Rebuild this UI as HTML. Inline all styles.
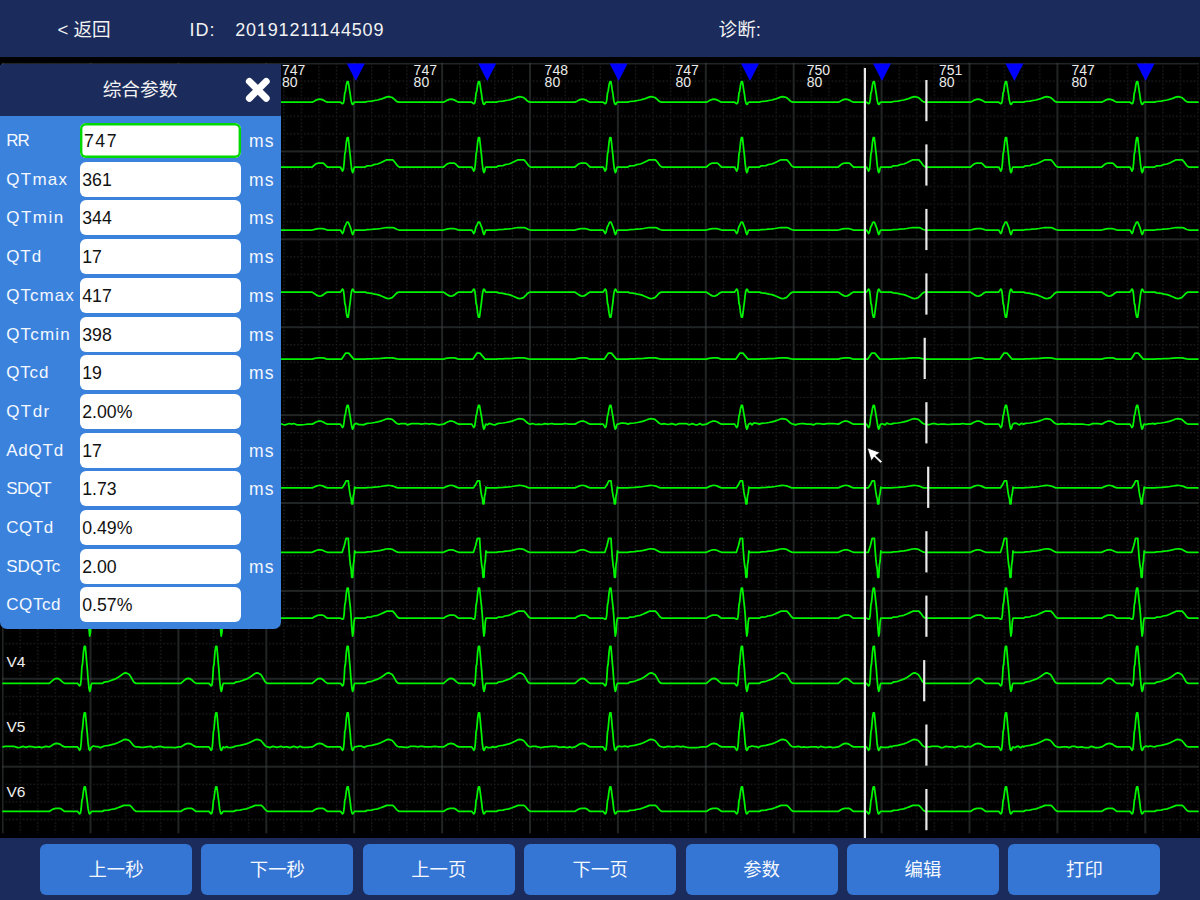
<!DOCTYPE html>
<html lang="zh"><head><meta charset="utf-8"><title>ECG</title>
<style>
html,body{margin:0;padding:0;background:#000;}
body{width:1200px;height:900px;position:relative;overflow:hidden;font-family:"Liberation Sans","Noto Sans CJK SC",sans-serif;color:#fff;}
#hdr{position:absolute;left:0;top:0;width:1200px;height:57px;background:#1a2b5c;}
#hdr span{position:absolute;top:0;line-height:60.6px;font-size:18px;color:#f2f2f2;white-space:nowrap;}
#hdr .cj{font-size:18.6px;}
#ecg{position:absolute;left:0;top:0;}
#panel{position:absolute;left:0;top:63.5px;width:280.8px;height:565.3px;background:#3b82dc;border-radius:4px 0 7px 7px;overflow:hidden;}
#ptitle{position:absolute;left:0;top:0;width:100%;height:52px;background:#1a2b5c;}
#ptitle span{position:absolute;left:0;width:280px;text-align:center;top:0;line-height:51.4px;font-size:18.7px;color:#f2f2f2;}
#close{position:absolute;left:243.7px;top:12.1px;}
.row{position:absolute;left:0;width:281px;height:35px;}
.row .lab{position:absolute;left:6.2px;top:0;line-height:36px;font-size:17px;color:#f4f8ff;white-space:nowrap;}
.row .inp{position:absolute;left:79.6px;top:0;width:161.6px;height:35px;box-sizing:border-box;background:#fff;border-radius:6px;color:#111;font-size:17.7px;line-height:36px;padding-left:2.7px;}
.row.first .inp{box-shadow:inset 0 0 0 2.4px #00d800;height:35.3px;padding-left:4.4px;letter-spacing:1.5px;}
.row .unit{position:absolute;left:249px;top:0;line-height:36px;font-size:17.5px;letter-spacing:1.2px;color:#f4f8ff;}
#bar{position:absolute;left:0;top:838.4px;width:1200px;height:61.6px;background:#1a2b5c;}
.btn{position:absolute;top:5.2px;width:152px;height:51.8px;background:#3575d3;border-radius:6px;text-align:center;line-height:52.6px;font-size:18.4px;color:#f4f8ff;}
</style></head>
<body>
<svg id="ecg" width="1200" height="900" viewBox="0 0 1200 900">
<defs>
<pattern id="g" x="2.60" y="63.50" width="87.900" height="87.900" patternUnits="userSpaceOnUse"><g fill="#2b2d2d"><rect x="16.98" y="-0.60" width="1.2" height="1.2"/><rect x="16.98" y="2.92" width="1.2" height="1.2"/><rect x="2.92" y="16.98" width="1.2" height="1.2"/><rect x="16.98" y="6.43" width="1.2" height="1.2"/><rect x="6.43" y="16.98" width="1.2" height="1.2"/><rect x="16.98" y="9.95" width="1.2" height="1.2"/><rect x="9.95" y="16.98" width="1.2" height="1.2"/><rect x="16.98" y="13.46" width="1.2" height="1.2"/><rect x="13.46" y="16.98" width="1.2" height="1.2"/><rect x="16.98" y="16.98" width="1.2" height="1.2"/><rect x="16.98" y="20.50" width="1.2" height="1.2"/><rect x="20.50" y="16.98" width="1.2" height="1.2"/><rect x="16.98" y="24.01" width="1.2" height="1.2"/><rect x="24.01" y="16.98" width="1.2" height="1.2"/><rect x="16.98" y="27.53" width="1.2" height="1.2"/><rect x="27.53" y="16.98" width="1.2" height="1.2"/><rect x="16.98" y="31.04" width="1.2" height="1.2"/><rect x="31.04" y="16.98" width="1.2" height="1.2"/><rect x="16.98" y="34.56" width="1.2" height="1.2"/><rect x="16.98" y="38.08" width="1.2" height="1.2"/><rect x="38.08" y="16.98" width="1.2" height="1.2"/><rect x="16.98" y="41.59" width="1.2" height="1.2"/><rect x="41.59" y="16.98" width="1.2" height="1.2"/><rect x="16.98" y="45.11" width="1.2" height="1.2"/><rect x="45.11" y="16.98" width="1.2" height="1.2"/><rect x="16.98" y="48.62" width="1.2" height="1.2"/><rect x="48.62" y="16.98" width="1.2" height="1.2"/><rect x="16.98" y="52.14" width="1.2" height="1.2"/><rect x="16.98" y="55.66" width="1.2" height="1.2"/><rect x="55.66" y="16.98" width="1.2" height="1.2"/><rect x="16.98" y="59.17" width="1.2" height="1.2"/><rect x="59.17" y="16.98" width="1.2" height="1.2"/><rect x="16.98" y="62.69" width="1.2" height="1.2"/><rect x="62.69" y="16.98" width="1.2" height="1.2"/><rect x="16.98" y="66.20" width="1.2" height="1.2"/><rect x="66.20" y="16.98" width="1.2" height="1.2"/><rect x="16.98" y="69.72" width="1.2" height="1.2"/><rect x="16.98" y="73.24" width="1.2" height="1.2"/><rect x="73.24" y="16.98" width="1.2" height="1.2"/><rect x="16.98" y="76.75" width="1.2" height="1.2"/><rect x="76.75" y="16.98" width="1.2" height="1.2"/><rect x="16.98" y="80.27" width="1.2" height="1.2"/><rect x="80.27" y="16.98" width="1.2" height="1.2"/><rect x="16.98" y="83.78" width="1.2" height="1.2"/><rect x="83.78" y="16.98" width="1.2" height="1.2"/><rect x="34.56" y="-0.60" width="1.2" height="1.2"/><rect x="34.56" y="2.92" width="1.2" height="1.2"/><rect x="2.92" y="34.56" width="1.2" height="1.2"/><rect x="34.56" y="6.43" width="1.2" height="1.2"/><rect x="6.43" y="34.56" width="1.2" height="1.2"/><rect x="34.56" y="9.95" width="1.2" height="1.2"/><rect x="9.95" y="34.56" width="1.2" height="1.2"/><rect x="34.56" y="13.46" width="1.2" height="1.2"/><rect x="13.46" y="34.56" width="1.2" height="1.2"/><rect x="34.56" y="16.98" width="1.2" height="1.2"/><rect x="34.56" y="20.50" width="1.2" height="1.2"/><rect x="20.50" y="34.56" width="1.2" height="1.2"/><rect x="34.56" y="24.01" width="1.2" height="1.2"/><rect x="24.01" y="34.56" width="1.2" height="1.2"/><rect x="34.56" y="27.53" width="1.2" height="1.2"/><rect x="27.53" y="34.56" width="1.2" height="1.2"/><rect x="34.56" y="31.04" width="1.2" height="1.2"/><rect x="31.04" y="34.56" width="1.2" height="1.2"/><rect x="34.56" y="34.56" width="1.2" height="1.2"/><rect x="34.56" y="38.08" width="1.2" height="1.2"/><rect x="38.08" y="34.56" width="1.2" height="1.2"/><rect x="34.56" y="41.59" width="1.2" height="1.2"/><rect x="41.59" y="34.56" width="1.2" height="1.2"/><rect x="34.56" y="45.11" width="1.2" height="1.2"/><rect x="45.11" y="34.56" width="1.2" height="1.2"/><rect x="34.56" y="48.62" width="1.2" height="1.2"/><rect x="48.62" y="34.56" width="1.2" height="1.2"/><rect x="34.56" y="52.14" width="1.2" height="1.2"/><rect x="34.56" y="55.66" width="1.2" height="1.2"/><rect x="55.66" y="34.56" width="1.2" height="1.2"/><rect x="34.56" y="59.17" width="1.2" height="1.2"/><rect x="59.17" y="34.56" width="1.2" height="1.2"/><rect x="34.56" y="62.69" width="1.2" height="1.2"/><rect x="62.69" y="34.56" width="1.2" height="1.2"/><rect x="34.56" y="66.20" width="1.2" height="1.2"/><rect x="66.20" y="34.56" width="1.2" height="1.2"/><rect x="34.56" y="69.72" width="1.2" height="1.2"/><rect x="34.56" y="73.24" width="1.2" height="1.2"/><rect x="73.24" y="34.56" width="1.2" height="1.2"/><rect x="34.56" y="76.75" width="1.2" height="1.2"/><rect x="76.75" y="34.56" width="1.2" height="1.2"/><rect x="34.56" y="80.27" width="1.2" height="1.2"/><rect x="80.27" y="34.56" width="1.2" height="1.2"/><rect x="34.56" y="83.78" width="1.2" height="1.2"/><rect x="83.78" y="34.56" width="1.2" height="1.2"/><rect x="52.14" y="-0.60" width="1.2" height="1.2"/><rect x="52.14" y="2.92" width="1.2" height="1.2"/><rect x="2.92" y="52.14" width="1.2" height="1.2"/><rect x="52.14" y="6.43" width="1.2" height="1.2"/><rect x="6.43" y="52.14" width="1.2" height="1.2"/><rect x="52.14" y="9.95" width="1.2" height="1.2"/><rect x="9.95" y="52.14" width="1.2" height="1.2"/><rect x="52.14" y="13.46" width="1.2" height="1.2"/><rect x="13.46" y="52.14" width="1.2" height="1.2"/><rect x="52.14" y="16.98" width="1.2" height="1.2"/><rect x="52.14" y="20.50" width="1.2" height="1.2"/><rect x="20.50" y="52.14" width="1.2" height="1.2"/><rect x="52.14" y="24.01" width="1.2" height="1.2"/><rect x="24.01" y="52.14" width="1.2" height="1.2"/><rect x="52.14" y="27.53" width="1.2" height="1.2"/><rect x="27.53" y="52.14" width="1.2" height="1.2"/><rect x="52.14" y="31.04" width="1.2" height="1.2"/><rect x="31.04" y="52.14" width="1.2" height="1.2"/><rect x="52.14" y="34.56" width="1.2" height="1.2"/><rect x="52.14" y="38.08" width="1.2" height="1.2"/><rect x="38.08" y="52.14" width="1.2" height="1.2"/><rect x="52.14" y="41.59" width="1.2" height="1.2"/><rect x="41.59" y="52.14" width="1.2" height="1.2"/><rect x="52.14" y="45.11" width="1.2" height="1.2"/><rect x="45.11" y="52.14" width="1.2" height="1.2"/><rect x="52.14" y="48.62" width="1.2" height="1.2"/><rect x="48.62" y="52.14" width="1.2" height="1.2"/><rect x="52.14" y="52.14" width="1.2" height="1.2"/><rect x="52.14" y="55.66" width="1.2" height="1.2"/><rect x="55.66" y="52.14" width="1.2" height="1.2"/><rect x="52.14" y="59.17" width="1.2" height="1.2"/><rect x="59.17" y="52.14" width="1.2" height="1.2"/><rect x="52.14" y="62.69" width="1.2" height="1.2"/><rect x="62.69" y="52.14" width="1.2" height="1.2"/><rect x="52.14" y="66.20" width="1.2" height="1.2"/><rect x="66.20" y="52.14" width="1.2" height="1.2"/><rect x="52.14" y="69.72" width="1.2" height="1.2"/><rect x="52.14" y="73.24" width="1.2" height="1.2"/><rect x="73.24" y="52.14" width="1.2" height="1.2"/><rect x="52.14" y="76.75" width="1.2" height="1.2"/><rect x="76.75" y="52.14" width="1.2" height="1.2"/><rect x="52.14" y="80.27" width="1.2" height="1.2"/><rect x="80.27" y="52.14" width="1.2" height="1.2"/><rect x="52.14" y="83.78" width="1.2" height="1.2"/><rect x="83.78" y="52.14" width="1.2" height="1.2"/><rect x="69.72" y="-0.60" width="1.2" height="1.2"/><rect x="69.72" y="2.92" width="1.2" height="1.2"/><rect x="2.92" y="69.72" width="1.2" height="1.2"/><rect x="69.72" y="6.43" width="1.2" height="1.2"/><rect x="6.43" y="69.72" width="1.2" height="1.2"/><rect x="69.72" y="9.95" width="1.2" height="1.2"/><rect x="9.95" y="69.72" width="1.2" height="1.2"/><rect x="69.72" y="13.46" width="1.2" height="1.2"/><rect x="13.46" y="69.72" width="1.2" height="1.2"/><rect x="69.72" y="16.98" width="1.2" height="1.2"/><rect x="69.72" y="20.50" width="1.2" height="1.2"/><rect x="20.50" y="69.72" width="1.2" height="1.2"/><rect x="69.72" y="24.01" width="1.2" height="1.2"/><rect x="24.01" y="69.72" width="1.2" height="1.2"/><rect x="69.72" y="27.53" width="1.2" height="1.2"/><rect x="27.53" y="69.72" width="1.2" height="1.2"/><rect x="69.72" y="31.04" width="1.2" height="1.2"/><rect x="31.04" y="69.72" width="1.2" height="1.2"/><rect x="69.72" y="34.56" width="1.2" height="1.2"/><rect x="69.72" y="38.08" width="1.2" height="1.2"/><rect x="38.08" y="69.72" width="1.2" height="1.2"/><rect x="69.72" y="41.59" width="1.2" height="1.2"/><rect x="41.59" y="69.72" width="1.2" height="1.2"/><rect x="69.72" y="45.11" width="1.2" height="1.2"/><rect x="45.11" y="69.72" width="1.2" height="1.2"/><rect x="69.72" y="48.62" width="1.2" height="1.2"/><rect x="48.62" y="69.72" width="1.2" height="1.2"/><rect x="69.72" y="52.14" width="1.2" height="1.2"/><rect x="69.72" y="55.66" width="1.2" height="1.2"/><rect x="55.66" y="69.72" width="1.2" height="1.2"/><rect x="69.72" y="59.17" width="1.2" height="1.2"/><rect x="59.17" y="69.72" width="1.2" height="1.2"/><rect x="69.72" y="62.69" width="1.2" height="1.2"/><rect x="62.69" y="69.72" width="1.2" height="1.2"/><rect x="69.72" y="66.20" width="1.2" height="1.2"/><rect x="66.20" y="69.72" width="1.2" height="1.2"/><rect x="69.72" y="69.72" width="1.2" height="1.2"/><rect x="69.72" y="73.24" width="1.2" height="1.2"/><rect x="73.24" y="69.72" width="1.2" height="1.2"/><rect x="69.72" y="76.75" width="1.2" height="1.2"/><rect x="76.75" y="69.72" width="1.2" height="1.2"/><rect x="69.72" y="80.27" width="1.2" height="1.2"/><rect x="80.27" y="69.72" width="1.2" height="1.2"/><rect x="69.72" y="83.78" width="1.2" height="1.2"/><rect x="83.78" y="69.72" width="1.2" height="1.2"/></g><rect x="-0.6" y="0" width="1.2" height="87.900" fill="#363c3c"/><rect x="87.300" y="0" width="1.2" height="87.900" fill="#363c3c"/><rect x="0" y="-0.6" width="87.900" height="1.2" fill="#363c3c"/><rect x="0" y="87.300" width="87.900" height="1.2" fill="#363c3c"/></pattern>
</defs>
<rect x="1.90" y="62.80" width="1197.00" height="770.50" fill="url(#g)"/>
<g fill="none" stroke="#00f400" stroke-width="1.75" stroke-linejoin="round" stroke-linecap="round">
<path d="M3.0 102.2 L49.3 102.2 L51.3 101.2 L53.3 100.1 L55.3 99.4 L56.8 99.2 L58.3 99.4 L60.3 100.1 L62.3 101.3 L64.5 102.2 L77.5 102.2 L78.6 103.0 L79.6 103.7 L80.5 103.1 L81.2 99.7 L81.9 92.9 L82.5 91.5 L83.5 84.7 L84.3 81.6 L85.3 81.6 L86.0 85.7 L86.6 89.8 L87.3 94.0 L88.1 100.1 L89.0 103.5 L89.7 104.4 L90.4 104.0 L91.1 102.6 L91.8 102.2 L102.3 102.2 L104.3 101.5 L108.8 101.1 L111.8 100.5 L114.8 100.0 L117.8 99.2 L120.8 98.1 L123.3 97.1 L125.3 96.7 L126.8 96.9 L129.3 97.5 L131.3 99.2 L133.3 101.1 L134.8 101.9 L136.3 102.2 L180.8 102.2 L182.8 101.2 L184.8 100.1 L186.8 99.4 L188.3 99.2 L189.8 99.4 L191.8 100.1 L193.8 101.3 L196.0 102.2 L209.0 102.2 L210.1 103.0 L211.1 103.7 L212.0 103.1 L212.7 99.7 L213.4 92.9 L214.0 91.5 L215.0 84.7 L215.8 81.6 L216.8 81.6 L217.5 85.7 L218.1 89.8 L218.8 94.0 L219.6 100.1 L220.5 103.5 L221.2 104.4 L221.9 104.0 L222.6 102.6 L223.3 102.2 L233.8 102.2 L235.8 101.5 L240.3 101.1 L243.3 100.5 L246.3 100.0 L249.3 99.2 L252.3 98.1 L254.8 97.1 L256.8 96.7 L258.3 96.9 L260.8 97.5 L262.8 99.2 L264.8 101.1 L266.3 101.9 L267.8 102.2 L312.2 102.2 L314.2 101.2 L316.2 100.1 L318.2 99.4 L319.7 99.2 L321.2 99.4 L323.2 100.1 L325.2 101.3 L327.4 102.2 L340.4 102.2 L341.5 103.0 L342.5 103.7 L343.4 103.1 L344.1 99.7 L344.8 92.9 L345.4 91.5 L346.4 84.7 L347.2 81.6 L348.2 81.6 L348.9 85.7 L349.5 89.8 L350.2 94.0 L351.0 100.1 L351.9 103.5 L352.6 104.4 L353.3 104.0 L354.0 102.6 L354.7 102.2 L365.2 102.2 L367.2 101.5 L371.7 101.1 L374.7 100.5 L377.7 100.0 L380.7 99.2 L383.7 98.1 L386.2 97.1 L388.2 96.7 L389.7 96.9 L392.2 97.5 L394.2 99.2 L396.2 101.1 L397.7 101.9 L399.2 102.2 L443.5 102.2 L445.5 101.2 L447.5 100.1 L449.5 99.4 L451.0 99.2 L452.5 99.4 L454.5 100.1 L456.5 101.3 L458.7 102.2 L471.7 102.2 L472.8 103.0 L473.8 103.7 L474.7 103.1 L475.4 99.7 L476.1 92.9 L476.7 91.5 L477.7 84.7 L478.5 81.6 L479.5 81.6 L480.2 85.7 L480.8 89.8 L481.5 94.0 L482.3 100.1 L483.2 103.5 L483.9 104.4 L484.6 104.0 L485.3 102.6 L486.0 102.2 L496.5 102.2 L498.5 101.5 L503.0 101.1 L506.0 100.5 L509.0 100.0 L512.0 99.2 L515.0 98.1 L517.5 97.1 L519.5 96.7 L521.0 96.9 L523.5 97.5 L525.5 99.2 L527.5 101.1 L529.0 101.9 L530.5 102.2 L574.9 102.2 L576.9 101.2 L578.9 100.1 L580.9 99.4 L582.4 99.2 L583.9 99.4 L585.9 100.1 L587.9 101.3 L590.1 102.2 L603.1 102.2 L604.2 103.0 L605.2 103.7 L606.1 103.1 L606.8 99.7 L607.5 92.9 L608.1 91.5 L609.1 84.7 L609.9 81.6 L610.9 81.6 L611.6 85.7 L612.2 89.8 L612.9 94.0 L613.7 100.1 L614.6 103.5 L615.3 104.4 L616.0 104.0 L616.7 102.6 L617.4 102.2 L627.9 102.2 L629.9 101.5 L634.4 101.1 L637.4 100.5 L640.4 100.0 L643.4 99.2 L646.4 98.1 L648.9 97.1 L650.9 96.7 L652.4 96.9 L654.9 97.5 L656.9 99.2 L658.9 101.1 L660.4 101.9 L661.9 102.2 L706.4 102.2 L708.4 101.2 L710.4 100.1 L712.4 99.4 L713.9 99.2 L715.4 99.4 L717.4 100.1 L719.4 101.3 L721.6 102.2 L734.6 102.2 L735.7 103.0 L736.7 103.7 L737.6 103.1 L738.3 99.7 L739.0 92.9 L739.6 91.5 L740.6 84.7 L741.4 81.6 L742.4 81.6 L743.1 85.7 L743.7 89.8 L744.4 94.0 L745.2 100.1 L746.1 103.5 L746.8 104.4 L747.5 104.0 L748.2 102.6 L748.9 102.2 L759.4 102.2 L761.4 101.5 L765.9 101.1 L768.9 100.5 L771.9 100.0 L774.9 99.2 L777.9 98.1 L780.4 97.1 L782.4 96.7 L783.9 96.9 L786.4 97.5 L788.4 99.2 L790.4 101.1 L791.9 101.9 L793.4 102.2 L838.3 102.2 L840.3 101.2 L842.3 100.1 L844.3 99.4 L845.8 99.2 L847.3 99.4 L849.3 100.1 L851.3 101.3 L853.5 102.2 L866.5 102.2 L867.6 103.0 L868.6 103.7 L869.5 103.1 L870.2 99.7 L870.9 92.9 L871.5 91.5 L872.5 84.7 L873.3 81.6 L874.3 81.6 L875.0 85.7 L875.6 89.8 L876.3 94.0 L877.1 100.1 L878.0 103.5 L878.7 104.4 L879.4 104.0 L880.1 102.6 L880.8 102.2 L891.3 102.2 L893.3 101.5 L897.8 101.1 L900.8 100.5 L903.8 100.0 L906.8 99.2 L909.8 98.1 L912.3 97.1 L914.3 96.7 L915.8 96.9 L918.3 97.5 L920.3 99.2 L922.3 101.1 L923.8 101.9 L925.3 102.2 L970.5 102.2 L972.5 101.2 L974.5 100.1 L976.5 99.4 L978.0 99.2 L979.5 99.4 L981.5 100.1 L983.5 101.3 L985.7 102.2 L998.7 102.2 L999.8 103.0 L1000.8 103.7 L1001.7 103.1 L1002.4 99.7 L1003.1 92.9 L1003.7 91.5 L1004.7 84.7 L1005.5 81.6 L1006.5 81.6 L1007.2 85.7 L1007.8 89.8 L1008.5 94.0 L1009.3 100.1 L1010.2 103.5 L1010.9 104.4 L1011.6 104.0 L1012.3 102.6 L1013.0 102.2 L1023.5 102.2 L1025.5 101.5 L1030.0 101.1 L1033.0 100.5 L1036.0 100.0 L1039.0 99.2 L1042.0 98.1 L1044.5 97.1 L1046.5 96.7 L1048.0 96.9 L1050.5 97.5 L1052.5 99.2 L1054.5 101.1 L1056.0 101.9 L1057.5 102.2 L1101.7 102.2 L1103.7 101.2 L1105.7 100.1 L1107.7 99.4 L1109.2 99.2 L1110.7 99.4 L1112.7 100.1 L1114.7 101.3 L1116.9 102.2 L1129.9 102.2 L1131.0 103.0 L1132.0 103.7 L1132.9 103.1 L1133.6 99.7 L1134.3 92.9 L1134.9 91.5 L1135.9 84.7 L1136.7 81.6 L1137.7 81.6 L1138.4 85.7 L1139.0 89.8 L1139.7 94.0 L1140.5 100.1 L1141.4 103.5 L1142.1 104.4 L1142.8 104.0 L1143.5 102.6 L1144.2 102.2 L1154.7 102.2 L1156.7 101.5 L1161.2 101.1 L1164.2 100.5 L1167.2 100.0 L1170.2 99.2 L1173.2 98.1 L1175.7 97.1 L1177.7 96.7 L1179.2 96.9 L1181.7 97.5 L1183.7 99.2 L1185.7 101.1 L1187.2 101.9 L1188.7 102.2 L1198.0 102.2"/>
<path d="M3.0 167.0 L49.3 167.0 L51.8 164.8 L53.8 163.6 L55.8 163.0 L59.8 163.0 L61.3 163.8 L63.3 166.0 L64.5 167.0 L77.5 167.0 L78.6 169.0 L79.6 171.0 L80.5 169.4 L81.2 163.5 L81.9 153.8 L82.5 151.7 L83.5 142.0 L84.3 137.6 L85.3 137.6 L86.0 143.5 L86.6 149.4 L87.3 155.2 L88.1 164.1 L89.0 170.4 L89.7 172.6 L90.4 171.5 L91.1 168.1 L91.8 167.0 L102.3 167.0 L104.3 165.8 L108.8 165.6 L110.8 164.7 L114.8 164.0 L117.8 162.7 L120.8 161.2 L123.8 159.8 L129.8 159.8 L131.8 162.0 L134.3 165.6 L136.3 167.0 L180.8 167.0 L183.3 164.8 L185.3 163.6 L187.3 163.0 L191.3 163.0 L192.8 163.8 L194.8 166.0 L196.0 167.0 L209.0 167.0 L210.1 169.0 L211.1 171.0 L212.0 169.4 L212.7 163.5 L213.4 153.8 L214.0 151.7 L215.0 142.0 L215.8 137.6 L216.8 137.6 L217.5 143.5 L218.1 149.4 L218.8 155.2 L219.6 164.1 L220.5 170.4 L221.2 172.6 L221.9 171.5 L222.6 168.1 L223.3 167.0 L233.8 167.0 L235.8 165.8 L240.3 165.6 L242.3 164.7 L246.3 164.0 L249.3 162.7 L252.3 161.2 L255.3 159.8 L261.3 159.8 L263.3 162.0 L265.8 165.6 L267.8 167.0 L312.2 167.0 L314.7 164.8 L316.7 163.6 L318.7 163.0 L322.7 163.0 L324.2 163.8 L326.2 166.0 L327.4 167.0 L340.4 167.0 L341.5 169.0 L342.5 171.0 L343.4 169.4 L344.1 163.5 L344.8 153.8 L345.4 151.7 L346.4 142.0 L347.2 137.6 L348.2 137.6 L348.9 143.5 L349.5 149.4 L350.2 155.2 L351.0 164.1 L351.9 170.4 L352.6 172.6 L353.3 171.5 L354.0 168.1 L354.7 167.0 L365.2 167.0 L367.2 165.8 L371.7 165.6 L373.7 164.7 L377.7 164.0 L380.7 162.7 L383.7 161.2 L386.7 159.8 L392.7 159.8 L394.7 162.0 L397.2 165.6 L399.2 167.0 L443.5 167.0 L446.0 164.8 L448.0 163.6 L450.0 163.0 L454.0 163.0 L455.5 163.8 L457.5 166.0 L458.7 167.0 L471.7 167.0 L472.8 169.0 L473.8 171.0 L474.7 169.4 L475.4 163.5 L476.1 153.8 L476.7 151.7 L477.7 142.0 L478.5 137.6 L479.5 137.6 L480.2 143.5 L480.8 149.4 L481.5 155.2 L482.3 164.1 L483.2 170.4 L483.9 172.6 L484.6 171.5 L485.3 168.1 L486.0 167.0 L496.5 167.0 L498.5 165.8 L503.0 165.6 L505.0 164.7 L509.0 164.0 L512.0 162.7 L515.0 161.2 L518.0 159.8 L524.0 159.8 L526.0 162.0 L528.5 165.6 L530.5 167.0 L574.9 167.0 L577.4 164.8 L579.4 163.6 L581.4 163.0 L585.4 163.0 L586.9 163.8 L588.9 166.0 L590.1 167.0 L603.1 167.0 L604.2 169.0 L605.2 171.0 L606.1 169.4 L606.8 163.5 L607.5 153.8 L608.1 151.7 L609.1 142.0 L609.9 137.6 L610.9 137.6 L611.6 143.5 L612.2 149.4 L612.9 155.2 L613.7 164.1 L614.6 170.4 L615.3 172.6 L616.0 171.5 L616.7 168.1 L617.4 167.0 L627.9 167.0 L629.9 165.8 L634.4 165.6 L636.4 164.7 L640.4 164.0 L643.4 162.7 L646.4 161.2 L649.4 159.8 L655.4 159.8 L657.4 162.0 L659.9 165.6 L661.9 167.0 L706.4 167.0 L708.9 164.8 L710.9 163.6 L712.9 163.0 L716.9 163.0 L718.4 163.8 L720.4 166.0 L721.6 167.0 L734.6 167.0 L735.7 169.0 L736.7 171.0 L737.6 169.4 L738.3 163.5 L739.0 153.8 L739.6 151.7 L740.6 142.0 L741.4 137.6 L742.4 137.6 L743.1 143.5 L743.7 149.4 L744.4 155.2 L745.2 164.1 L746.1 170.4 L746.8 172.6 L747.5 171.5 L748.2 168.1 L748.9 167.0 L759.4 167.0 L761.4 165.8 L765.9 165.6 L767.9 164.7 L771.9 164.0 L774.9 162.7 L777.9 161.2 L780.9 159.8 L786.9 159.8 L788.9 162.0 L791.4 165.6 L793.4 167.0 L838.3 167.0 L840.8 164.8 L842.8 163.6 L844.8 163.0 L848.8 163.0 L850.3 163.8 L852.3 166.0 L853.5 167.0 L866.5 167.0 L867.6 169.0 L868.6 171.0 L869.5 169.4 L870.2 163.5 L870.9 153.8 L871.5 151.7 L872.5 142.0 L873.3 137.6 L874.3 137.6 L875.0 143.5 L875.6 149.4 L876.3 155.2 L877.1 164.1 L878.0 170.4 L878.7 172.6 L879.4 171.5 L880.1 168.1 L880.8 167.0 L891.3 167.0 L893.3 165.8 L897.8 165.6 L899.8 164.7 L903.8 164.0 L906.8 162.7 L909.8 161.2 L912.8 159.8 L918.8 159.8 L920.8 162.0 L923.3 165.6 L925.3 167.0 L970.5 167.0 L973.0 164.8 L975.0 163.6 L977.0 163.0 L981.0 163.0 L982.5 163.8 L984.5 166.0 L985.7 167.0 L998.7 167.0 L999.8 169.0 L1000.8 171.0 L1001.7 169.4 L1002.4 163.5 L1003.1 153.8 L1003.7 151.7 L1004.7 142.0 L1005.5 137.6 L1006.5 137.6 L1007.2 143.5 L1007.8 149.4 L1008.5 155.2 L1009.3 164.1 L1010.2 170.4 L1010.9 172.6 L1011.6 171.5 L1012.3 168.1 L1013.0 167.0 L1023.5 167.0 L1025.5 165.8 L1030.0 165.6 L1032.0 164.7 L1036.0 164.0 L1039.0 162.7 L1042.0 161.2 L1045.0 159.8 L1051.0 159.8 L1053.0 162.0 L1055.5 165.6 L1057.5 167.0 L1101.7 167.0 L1104.2 164.8 L1106.2 163.6 L1108.2 163.0 L1112.2 163.0 L1113.7 163.8 L1115.7 166.0 L1116.9 167.0 L1129.9 167.0 L1131.0 169.0 L1132.0 171.0 L1132.9 169.4 L1133.6 163.5 L1134.3 153.8 L1134.9 151.7 L1135.9 142.0 L1136.7 137.6 L1137.7 137.6 L1138.4 143.5 L1139.0 149.4 L1139.7 155.2 L1140.5 164.1 L1141.4 170.4 L1142.1 172.6 L1142.8 171.5 L1143.5 168.1 L1144.2 167.0 L1154.7 167.0 L1156.7 165.8 L1161.2 165.6 L1163.2 164.7 L1167.2 164.0 L1170.2 162.7 L1173.2 161.2 L1176.2 159.8 L1182.2 159.8 L1184.2 162.0 L1186.7 165.6 L1188.7 167.0 L1198.0 167.0"/>
<path d="M3.0 230.0 L49.3 230.0 L51.8 229.3 L53.8 228.9 L55.8 228.7 L59.8 228.7 L61.3 229.0 L63.3 229.7 L64.5 230.0 L77.5 230.0 L78.6 231.8 L79.6 233.5 L80.5 232.1 L81.2 229.0 L81.9 226.4 L82.5 225.8 L83.5 223.2 L84.3 222.0 L85.3 222.0 L86.0 223.6 L86.6 225.2 L87.3 226.8 L88.1 229.2 L89.0 232.7 L89.7 234.5 L90.4 233.6 L91.1 230.9 L91.8 230.0 L102.3 230.0 L104.3 229.6 L108.8 229.5 L110.8 229.2 L114.8 228.9 L117.8 228.5 L120.8 228.0 L123.8 227.5 L129.8 227.5 L131.8 228.2 L134.3 229.5 L136.3 230.0 L180.8 230.0 L183.3 229.3 L185.3 228.9 L187.3 228.7 L191.3 228.7 L192.8 229.0 L194.8 229.7 L196.0 230.0 L209.0 230.0 L210.1 231.8 L211.1 233.5 L212.0 232.1 L212.7 229.0 L213.4 226.4 L214.0 225.8 L215.0 223.2 L215.8 222.0 L216.8 222.0 L217.5 223.6 L218.1 225.2 L218.8 226.8 L219.6 229.2 L220.5 232.7 L221.2 234.5 L221.9 233.6 L222.6 230.9 L223.3 230.0 L233.8 230.0 L235.8 229.6 L240.3 229.5 L242.3 229.2 L246.3 228.9 L249.3 228.5 L252.3 228.0 L255.3 227.5 L261.3 227.5 L263.3 228.2 L265.8 229.5 L267.8 230.0 L312.2 230.0 L314.7 229.3 L316.7 228.9 L318.7 228.7 L322.7 228.7 L324.2 229.0 L326.2 229.7 L327.4 230.0 L340.4 230.0 L341.5 231.8 L342.5 233.5 L343.4 232.1 L344.1 229.0 L344.8 226.4 L345.4 225.8 L346.4 223.2 L347.2 222.0 L348.2 222.0 L348.9 223.6 L349.5 225.2 L350.2 226.8 L351.0 229.2 L351.9 232.7 L352.6 234.5 L353.3 233.6 L354.0 230.9 L354.7 230.0 L365.2 230.0 L367.2 229.6 L371.7 229.5 L373.7 229.2 L377.7 228.9 L380.7 228.5 L383.7 228.0 L386.7 227.5 L392.7 227.5 L394.7 228.2 L397.2 229.5 L399.2 230.0 L443.5 230.0 L446.0 229.3 L448.0 228.9 L450.0 228.7 L454.0 228.7 L455.5 229.0 L457.5 229.7 L458.7 230.0 L471.7 230.0 L472.8 231.8 L473.8 233.5 L474.7 232.1 L475.4 229.0 L476.1 226.4 L476.7 225.8 L477.7 223.2 L478.5 222.0 L479.5 222.0 L480.2 223.6 L480.8 225.2 L481.5 226.8 L482.3 229.2 L483.2 232.7 L483.9 234.5 L484.6 233.6 L485.3 230.9 L486.0 230.0 L496.5 230.0 L498.5 229.6 L503.0 229.5 L505.0 229.2 L509.0 228.9 L512.0 228.5 L515.0 228.0 L518.0 227.5 L524.0 227.5 L526.0 228.2 L528.5 229.5 L530.5 230.0 L574.9 230.0 L577.4 229.3 L579.4 228.9 L581.4 228.7 L585.4 228.7 L586.9 229.0 L588.9 229.7 L590.1 230.0 L603.1 230.0 L604.2 231.8 L605.2 233.5 L606.1 232.1 L606.8 229.0 L607.5 226.4 L608.1 225.8 L609.1 223.2 L609.9 222.0 L610.9 222.0 L611.6 223.6 L612.2 225.2 L612.9 226.8 L613.7 229.2 L614.6 232.7 L615.3 234.5 L616.0 233.6 L616.7 230.9 L617.4 230.0 L627.9 230.0 L629.9 229.6 L634.4 229.5 L636.4 229.2 L640.4 228.9 L643.4 228.5 L646.4 228.0 L649.4 227.5 L655.4 227.5 L657.4 228.2 L659.9 229.5 L661.9 230.0 L706.4 230.0 L708.9 229.3 L710.9 228.9 L712.9 228.7 L716.9 228.7 L718.4 229.0 L720.4 229.7 L721.6 230.0 L734.6 230.0 L735.7 231.8 L736.7 233.5 L737.6 232.1 L738.3 229.0 L739.0 226.4 L739.6 225.8 L740.6 223.2 L741.4 222.0 L742.4 222.0 L743.1 223.6 L743.7 225.2 L744.4 226.8 L745.2 229.2 L746.1 232.7 L746.8 234.5 L747.5 233.6 L748.2 230.9 L748.9 230.0 L759.4 230.0 L761.4 229.6 L765.9 229.5 L767.9 229.2 L771.9 228.9 L774.9 228.5 L777.9 228.0 L780.9 227.5 L786.9 227.5 L788.9 228.2 L791.4 229.5 L793.4 230.0 L838.3 230.0 L840.8 229.3 L842.8 228.9 L844.8 228.7 L848.8 228.7 L850.3 229.0 L852.3 229.7 L853.5 230.0 L866.5 230.0 L867.6 231.8 L868.6 233.5 L869.5 232.1 L870.2 229.0 L870.9 226.4 L871.5 225.8 L872.5 223.2 L873.3 222.0 L874.3 222.0 L875.0 223.6 L875.6 225.2 L876.3 226.8 L877.1 229.2 L878.0 232.7 L878.7 234.5 L879.4 233.6 L880.1 230.9 L880.8 230.0 L891.3 230.0 L893.3 229.6 L897.8 229.5 L899.8 229.2 L903.8 228.9 L906.8 228.5 L909.8 228.0 L912.8 227.5 L918.8 227.5 L920.8 228.2 L923.3 229.5 L925.3 230.0 L970.5 230.0 L973.0 229.3 L975.0 228.9 L977.0 228.7 L981.0 228.7 L982.5 229.0 L984.5 229.7 L985.7 230.0 L998.7 230.0 L999.8 231.8 L1000.8 233.5 L1001.7 232.1 L1002.4 229.0 L1003.1 226.4 L1003.7 225.8 L1004.7 223.2 L1005.5 222.0 L1006.5 222.0 L1007.2 223.6 L1007.8 225.2 L1008.5 226.8 L1009.3 229.2 L1010.2 232.7 L1010.9 234.5 L1011.6 233.6 L1012.3 230.9 L1013.0 230.0 L1023.5 230.0 L1025.5 229.6 L1030.0 229.5 L1032.0 229.2 L1036.0 228.9 L1039.0 228.5 L1042.0 228.0 L1045.0 227.5 L1051.0 227.5 L1053.0 228.2 L1055.5 229.5 L1057.5 230.0 L1101.7 230.0 L1104.2 229.3 L1106.2 228.9 L1108.2 228.7 L1112.2 228.7 L1113.7 229.0 L1115.7 229.7 L1116.9 230.0 L1129.9 230.0 L1131.0 231.8 L1132.0 233.5 L1132.9 232.1 L1133.6 229.0 L1134.3 226.4 L1134.9 225.8 L1135.9 223.2 L1136.7 222.0 L1137.7 222.0 L1138.4 223.6 L1139.0 225.2 L1139.7 226.8 L1140.5 229.2 L1141.4 232.7 L1142.1 234.5 L1142.8 233.6 L1143.5 230.9 L1144.2 230.0 L1154.7 230.0 L1156.7 229.6 L1161.2 229.5 L1163.2 229.2 L1167.2 228.9 L1170.2 228.5 L1173.2 228.0 L1176.2 227.5 L1182.2 227.5 L1184.2 228.2 L1186.7 229.5 L1188.7 230.0 L1198.0 230.0"/>
<path d="M3.0 292.1 L49.3 292.1 L51.3 293.5 L53.3 294.9 L55.3 295.9 L56.8 296.1 L58.3 295.9 L60.3 294.9 L62.3 293.3 L64.5 292.1 L77.5 292.1 L78.6 290.6 L79.6 289.1 L80.5 290.3 L81.2 295.1 L81.9 303.4 L82.5 305.1 L83.5 313.4 L84.3 317.1 L85.3 317.1 L86.0 312.1 L86.6 307.1 L87.3 302.1 L88.1 294.6 L89.0 290.3 L89.7 289.1 L90.4 289.7 L91.1 291.5 L91.8 292.1 L102.3 292.1 L104.3 292.9 L108.8 293.4 L111.8 294.1 L114.8 294.7 L117.8 295.7 L120.8 297.0 L123.3 298.1 L125.3 298.6 L126.8 298.4 L129.3 297.6 L131.3 295.7 L133.3 293.4 L134.8 292.4 L136.3 292.1 L180.8 292.1 L182.8 293.5 L184.8 294.9 L186.8 295.9 L188.3 296.1 L189.8 295.9 L191.8 294.9 L193.8 293.3 L196.0 292.1 L209.0 292.1 L210.1 290.6 L211.1 289.1 L212.0 290.3 L212.7 295.1 L213.4 303.4 L214.0 305.1 L215.0 313.4 L215.8 317.1 L216.8 317.1 L217.5 312.1 L218.1 307.1 L218.8 302.1 L219.6 294.6 L220.5 290.3 L221.2 289.1 L221.9 289.7 L222.6 291.5 L223.3 292.1 L233.8 292.1 L235.8 292.9 L240.3 293.4 L243.3 294.1 L246.3 294.7 L249.3 295.7 L252.3 297.0 L254.8 298.1 L256.8 298.6 L258.3 298.4 L260.8 297.6 L262.8 295.7 L264.8 293.4 L266.3 292.4 L267.8 292.1 L312.2 292.1 L314.2 293.5 L316.2 294.9 L318.2 295.9 L319.7 296.1 L321.2 295.9 L323.2 294.9 L325.2 293.3 L327.4 292.1 L340.4 292.1 L341.5 290.6 L342.5 289.1 L343.4 290.3 L344.1 295.1 L344.8 303.4 L345.4 305.1 L346.4 313.4 L347.2 317.1 L348.2 317.1 L348.9 312.1 L349.5 307.1 L350.2 302.1 L351.0 294.6 L351.9 290.3 L352.6 289.1 L353.3 289.7 L354.0 291.5 L354.7 292.1 L365.2 292.1 L367.2 292.9 L371.7 293.4 L374.7 294.1 L377.7 294.7 L380.7 295.7 L383.7 297.0 L386.2 298.1 L388.2 298.6 L389.7 298.4 L392.2 297.6 L394.2 295.7 L396.2 293.4 L397.7 292.4 L399.2 292.1 L443.5 292.1 L445.5 293.5 L447.5 294.9 L449.5 295.9 L451.0 296.1 L452.5 295.9 L454.5 294.9 L456.5 293.3 L458.7 292.1 L471.7 292.1 L472.8 290.6 L473.8 289.1 L474.7 290.3 L475.4 295.1 L476.1 303.4 L476.7 305.1 L477.7 313.4 L478.5 317.1 L479.5 317.1 L480.2 312.1 L480.8 307.1 L481.5 302.1 L482.3 294.6 L483.2 290.3 L483.9 289.1 L484.6 289.7 L485.3 291.5 L486.0 292.1 L496.5 292.1 L498.5 292.9 L503.0 293.4 L506.0 294.1 L509.0 294.7 L512.0 295.7 L515.0 297.0 L517.5 298.1 L519.5 298.6 L521.0 298.4 L523.5 297.6 L525.5 295.7 L527.5 293.4 L529.0 292.4 L530.5 292.1 L574.9 292.1 L576.9 293.5 L578.9 294.9 L580.9 295.9 L582.4 296.1 L583.9 295.9 L585.9 294.9 L587.9 293.3 L590.1 292.1 L603.1 292.1 L604.2 290.6 L605.2 289.1 L606.1 290.3 L606.8 295.1 L607.5 303.4 L608.1 305.1 L609.1 313.4 L609.9 317.1 L610.9 317.1 L611.6 312.1 L612.2 307.1 L612.9 302.1 L613.7 294.6 L614.6 290.3 L615.3 289.1 L616.0 289.7 L616.7 291.5 L617.4 292.1 L627.9 292.1 L629.9 292.9 L634.4 293.4 L637.4 294.1 L640.4 294.7 L643.4 295.7 L646.4 297.0 L648.9 298.1 L650.9 298.6 L652.4 298.4 L654.9 297.6 L656.9 295.7 L658.9 293.4 L660.4 292.4 L661.9 292.1 L706.4 292.1 L708.4 293.5 L710.4 294.9 L712.4 295.9 L713.9 296.1 L715.4 295.9 L717.4 294.9 L719.4 293.3 L721.6 292.1 L734.6 292.1 L735.7 290.6 L736.7 289.1 L737.6 290.3 L738.3 295.1 L739.0 303.4 L739.6 305.1 L740.6 313.4 L741.4 317.1 L742.4 317.1 L743.1 312.1 L743.7 307.1 L744.4 302.1 L745.2 294.6 L746.1 290.3 L746.8 289.1 L747.5 289.7 L748.2 291.5 L748.9 292.1 L759.4 292.1 L761.4 292.9 L765.9 293.4 L768.9 294.1 L771.9 294.7 L774.9 295.7 L777.9 297.0 L780.4 298.1 L782.4 298.6 L783.9 298.4 L786.4 297.6 L788.4 295.7 L790.4 293.4 L791.9 292.4 L793.4 292.1 L838.3 292.1 L840.3 293.5 L842.3 294.9 L844.3 295.9 L845.8 296.1 L847.3 295.9 L849.3 294.9 L851.3 293.3 L853.5 292.1 L866.5 292.1 L867.6 290.6 L868.6 289.1 L869.5 290.3 L870.2 295.1 L870.9 303.4 L871.5 305.1 L872.5 313.4 L873.3 317.1 L874.3 317.1 L875.0 312.1 L875.6 307.1 L876.3 302.1 L877.1 294.6 L878.0 290.3 L878.7 289.1 L879.4 289.7 L880.1 291.5 L880.8 292.1 L891.3 292.1 L893.3 292.9 L897.8 293.4 L900.8 294.1 L903.8 294.7 L906.8 295.7 L909.8 297.0 L912.3 298.1 L914.3 298.6 L915.8 298.4 L918.3 297.6 L920.3 295.7 L922.3 293.4 L923.8 292.4 L925.3 292.1 L970.5 292.1 L972.5 293.5 L974.5 294.9 L976.5 295.9 L978.0 296.1 L979.5 295.9 L981.5 294.9 L983.5 293.3 L985.7 292.1 L998.7 292.1 L999.8 290.6 L1000.8 289.1 L1001.7 290.3 L1002.4 295.1 L1003.1 303.4 L1003.7 305.1 L1004.7 313.4 L1005.5 317.1 L1006.5 317.1 L1007.2 312.1 L1007.8 307.1 L1008.5 302.1 L1009.3 294.6 L1010.2 290.3 L1010.9 289.1 L1011.6 289.7 L1012.3 291.5 L1013.0 292.1 L1023.5 292.1 L1025.5 292.9 L1030.0 293.4 L1033.0 294.1 L1036.0 294.7 L1039.0 295.7 L1042.0 297.0 L1044.5 298.1 L1046.5 298.6 L1048.0 298.4 L1050.5 297.6 L1052.5 295.7 L1054.5 293.4 L1056.0 292.4 L1057.5 292.1 L1101.7 292.1 L1103.7 293.5 L1105.7 294.9 L1107.7 295.9 L1109.2 296.1 L1110.7 295.9 L1112.7 294.9 L1114.7 293.3 L1116.9 292.1 L1129.9 292.1 L1131.0 290.6 L1132.0 289.1 L1132.9 290.3 L1133.6 295.1 L1134.3 303.4 L1134.9 305.1 L1135.9 313.4 L1136.7 317.1 L1137.7 317.1 L1138.4 312.1 L1139.0 307.1 L1139.7 302.1 L1140.5 294.6 L1141.4 290.3 L1142.1 289.1 L1142.8 289.7 L1143.5 291.5 L1144.2 292.1 L1154.7 292.1 L1156.7 292.9 L1161.2 293.4 L1164.2 294.1 L1167.2 294.7 L1170.2 295.7 L1173.2 297.0 L1175.7 298.1 L1177.7 298.6 L1179.2 298.4 L1181.7 297.6 L1183.7 295.7 L1185.7 293.4 L1187.2 292.4 L1188.7 292.1 L1198.0 292.1"/>
<path d="M3.0 359.1 L49.3 359.1 L51.8 358.4 L53.8 358.1 L55.8 357.9 L59.8 357.9 L61.3 358.1 L63.3 358.8 L64.5 359.1 L78.8 359.1 L82.8 353.1 L85.8 353.1 L90.8 359.1 L102.3 359.1 L104.3 358.9 L108.8 358.9 L110.8 358.7 L114.8 358.6 L117.8 358.4 L120.8 358.1 L123.8 357.9 L129.8 357.9 L131.8 358.3 L134.3 358.9 L136.3 359.1 L180.8 359.1 L183.3 358.4 L185.3 358.1 L187.3 357.9 L191.3 357.9 L192.8 358.1 L194.8 358.8 L196.0 359.1 L210.3 359.1 L214.3 353.1 L217.3 353.1 L222.3 359.1 L233.8 359.1 L235.8 358.9 L240.3 358.9 L242.3 358.7 L246.3 358.6 L249.3 358.4 L252.3 358.1 L255.3 357.9 L261.3 357.9 L263.3 358.3 L265.8 358.9 L267.8 359.1 L312.2 359.1 L314.7 358.4 L316.7 358.1 L318.7 357.9 L322.7 357.9 L324.2 358.1 L326.2 358.8 L327.4 359.1 L341.7 359.1 L345.7 353.1 L348.7 353.1 L353.7 359.1 L365.2 359.1 L367.2 358.9 L371.7 358.9 L373.7 358.7 L377.7 358.6 L380.7 358.4 L383.7 358.1 L386.7 357.9 L392.7 357.9 L394.7 358.3 L397.2 358.9 L399.2 359.1 L443.5 359.1 L446.0 358.4 L448.0 358.1 L450.0 357.9 L454.0 357.9 L455.5 358.1 L457.5 358.8 L458.7 359.1 L473.0 359.1 L477.0 353.1 L480.0 353.1 L485.0 359.1 L496.5 359.1 L498.5 358.9 L503.0 358.9 L505.0 358.7 L509.0 358.6 L512.0 358.4 L515.0 358.1 L518.0 357.9 L524.0 357.9 L526.0 358.3 L528.5 358.9 L530.5 359.1 L574.9 359.1 L577.4 358.4 L579.4 358.1 L581.4 357.9 L585.4 357.9 L586.9 358.1 L588.9 358.8 L590.1 359.1 L604.4 359.1 L608.4 353.1 L611.4 353.1 L616.4 359.1 L627.9 359.1 L629.9 358.9 L634.4 358.9 L636.4 358.7 L640.4 358.6 L643.4 358.4 L646.4 358.1 L649.4 357.9 L655.4 357.9 L657.4 358.3 L659.9 358.9 L661.9 359.1 L706.4 359.1 L708.9 358.4 L710.9 358.1 L712.9 357.9 L716.9 357.9 L718.4 358.1 L720.4 358.8 L721.6 359.1 L735.9 359.1 L739.9 353.1 L742.9 353.1 L747.9 359.1 L759.4 359.1 L761.4 358.9 L765.9 358.9 L767.9 358.7 L771.9 358.6 L774.9 358.4 L777.9 358.1 L780.9 357.9 L786.9 357.9 L788.9 358.3 L791.4 358.9 L793.4 359.1 L838.3 359.1 L840.8 358.4 L842.8 358.1 L844.8 357.9 L848.8 357.9 L850.3 358.1 L852.3 358.8 L853.5 359.1 L867.8 359.1 L871.8 353.1 L874.8 353.1 L879.8 359.1 L891.3 359.1 L893.3 358.9 L897.8 358.9 L899.8 358.7 L903.8 358.6 L906.8 358.4 L909.8 358.1 L912.8 357.9 L918.8 357.9 L920.8 358.3 L923.3 358.9 L925.3 359.1 L970.5 359.1 L973.0 358.4 L975.0 358.1 L977.0 357.9 L981.0 357.9 L982.5 358.1 L984.5 358.8 L985.7 359.1 L1000.0 359.1 L1004.0 353.1 L1007.0 353.1 L1012.0 359.1 L1023.5 359.1 L1025.5 358.9 L1030.0 358.9 L1032.0 358.7 L1036.0 358.6 L1039.0 358.4 L1042.0 358.1 L1045.0 357.9 L1051.0 357.9 L1053.0 358.3 L1055.5 358.9 L1057.5 359.1 L1101.7 359.1 L1104.2 358.4 L1106.2 358.1 L1108.2 357.9 L1112.2 357.9 L1113.7 358.1 L1115.7 358.8 L1116.9 359.1 L1131.2 359.1 L1135.2 353.1 L1138.2 353.1 L1143.2 359.1 L1154.7 359.1 L1156.7 358.9 L1161.2 358.9 L1163.2 358.7 L1167.2 358.6 L1170.2 358.4 L1173.2 358.1 L1176.2 357.9 L1182.2 357.9 L1184.2 358.3 L1186.7 358.9 L1188.7 359.1 L1198.0 359.1"/>
<path d="M3.0 424.1 L5.0 424.1 L7.2 423.5 L11.2 424.8 L13.4 424.5 L15.6 424.1 L19.6 424.8 L23.6 424.1 L25.8 424.8 L28.9 423.5 L31.1 424.1 L33.3 424.5 L36.4 424.8 L40.4 424.8 L42.6 423.6 L46.6 424.5 L49.3 424.1 L51.3 423.1 L53.3 422.0 L55.3 421.2 L56.8 421.1 L58.3 421.2 L60.3 422.0 L62.3 423.2 L64.5 424.1 L77.5 424.1 L78.6 425.9 L79.6 427.6 L80.5 426.2 L81.2 421.9 L81.9 415.7 L82.5 414.4 L83.5 408.2 L84.3 405.4 L85.3 405.4 L86.0 409.1 L86.6 412.9 L87.3 416.6 L88.1 422.2 L89.0 427.1 L89.7 429.1 L90.4 428.1 L91.1 425.1 L91.8 424.1 L93.3 423.2 L96.1 424.6 L97.7 423.8 L99.3 423.2 L100.9 423.4 L102.3 424.1 L104.3 423.4 L108.8 423.0 L111.8 422.5 L114.8 421.9 L117.8 421.1 L120.8 420.0 L123.3 419.0 L125.3 418.6 L126.8 418.8 L129.3 419.4 L131.3 421.1 L133.3 423.0 L134.8 423.8 L136.3 424.1 L138.3 424.1 L142.3 424.8 L146.3 424.1 L150.3 423.6 L152.5 424.8 L156.5 424.5 L160.5 424.1 L163.6 424.8 L167.6 423.6 L169.8 424.5 L172.0 424.5 L174.2 423.5 L178.2 424.5 L180.8 424.1 L182.8 423.1 L184.8 422.0 L186.8 421.2 L188.3 421.1 L189.8 421.2 L191.8 422.0 L193.8 423.2 L196.0 424.1 L209.0 424.1 L210.1 425.9 L211.1 427.6 L212.0 426.2 L212.7 421.9 L213.4 415.7 L214.0 414.4 L215.0 408.2 L215.8 405.4 L216.8 405.4 L217.5 409.1 L218.1 412.9 L218.8 416.6 L219.6 422.2 L220.5 427.1 L221.2 429.1 L221.9 428.1 L222.6 425.1 L223.3 424.1 L224.8 423.4 L227.0 423.2 L229.2 423.4 L231.4 423.8 L233.0 423.8 L233.8 424.1 L235.8 423.4 L240.3 423.0 L243.3 422.5 L246.3 421.9 L249.3 421.1 L252.3 420.0 L254.8 419.0 L256.8 418.6 L258.3 418.8 L260.8 419.4 L262.8 421.1 L264.8 423.0 L266.3 423.8 L267.8 424.1 L269.8 424.5 L272.9 424.5 L276.0 424.1 L280.0 423.5 L283.1 424.5 L285.3 424.8 L289.3 423.5 L291.5 424.1 L293.7 423.5 L296.8 424.8 L300.8 424.8 L304.8 424.5 L307.9 424.1 L312.2 424.1 L314.2 423.1 L316.2 422.0 L318.2 421.2 L319.7 421.1 L321.2 421.2 L323.2 422.0 L325.2 423.2 L327.4 424.1 L340.4 424.1 L341.5 425.9 L342.5 427.6 L343.4 426.2 L344.1 421.9 L344.8 415.7 L345.4 414.4 L346.4 408.2 L347.2 405.4 L348.2 405.4 L348.9 409.1 L349.5 412.9 L350.2 416.6 L351.0 422.2 L351.9 427.1 L352.6 429.1 L353.3 428.1 L354.0 425.1 L354.7 424.1 L356.2 423.4 L359.0 424.6 L361.8 424.6 L363.4 424.9 L365.2 424.1 L367.2 423.4 L371.7 423.0 L374.7 422.5 L377.7 421.9 L380.7 421.1 L383.7 420.0 L386.2 419.0 L388.2 418.6 L389.7 418.8 L392.2 419.4 L394.2 421.1 L396.2 423.0 L397.7 423.8 L399.2 424.1 L401.2 423.5 L405.2 423.6 L407.4 424.8 L411.4 423.6 L414.5 423.6 L418.5 423.6 L421.6 424.1 L425.6 423.5 L429.6 424.1 L431.8 423.5 L434.9 424.1 L438.9 424.8 L443.5 424.1 L445.5 423.1 L447.5 422.0 L449.5 421.2 L451.0 421.1 L452.5 421.2 L454.5 422.0 L456.5 423.2 L458.7 424.1 L471.7 424.1 L472.8 425.9 L473.8 427.6 L474.7 426.2 L475.4 421.9 L476.1 415.7 L476.7 414.4 L477.7 408.2 L478.5 405.4 L479.5 405.4 L480.2 409.1 L480.8 412.9 L481.5 416.6 L482.3 422.2 L483.2 427.1 L483.9 429.1 L484.6 428.1 L485.3 425.1 L486.0 424.1 L487.5 424.9 L489.1 423.4 L490.7 423.8 L492.9 424.6 L495.1 424.9 L496.5 424.1 L498.5 423.4 L503.0 423.0 L506.0 422.5 L509.0 421.9 L512.0 421.1 L515.0 420.0 L517.5 419.0 L519.5 418.6 L521.0 418.8 L523.5 419.4 L525.5 421.1 L527.5 423.0 L529.0 423.8 L530.5 424.1 L532.5 423.5 L535.6 424.5 L538.7 424.1 L541.8 424.5 L544.9 423.6 L548.0 424.1 L552.0 423.5 L554.2 424.1 L556.4 424.1 L558.6 424.1 L562.6 424.1 L564.8 423.5 L568.8 424.1 L571.9 424.1 L574.9 424.1 L576.9 423.1 L578.9 422.0 L580.9 421.2 L582.4 421.1 L583.9 421.2 L585.9 422.0 L587.9 423.2 L590.1 424.1 L603.1 424.1 L604.2 425.9 L605.2 427.6 L606.1 426.2 L606.8 421.9 L607.5 415.7 L608.1 414.4 L609.1 408.2 L609.9 405.4 L610.9 405.4 L611.6 409.1 L612.2 412.9 L612.9 416.6 L613.7 422.2 L614.6 427.1 L615.3 429.1 L616.0 428.1 L616.7 425.1 L617.4 424.1 L618.9 423.8 L621.1 423.2 L623.3 423.2 L626.1 423.4 L627.9 424.1 L629.9 423.4 L634.4 423.0 L637.4 422.5 L640.4 421.9 L643.4 421.1 L646.4 420.0 L648.9 419.0 L650.9 418.6 L652.4 418.8 L654.9 419.4 L656.9 421.1 L658.9 423.0 L660.4 423.8 L661.9 424.1 L663.9 423.6 L667.9 424.5 L671.9 423.6 L675.9 424.8 L679.0 423.6 L683.0 423.5 L686.1 423.5 L689.2 424.8 L692.3 423.6 L695.4 424.8 L697.6 424.8 L699.8 423.5 L702.0 424.8 L706.4 424.1 L708.4 423.1 L710.4 422.0 L712.4 421.2 L713.9 421.1 L715.4 421.2 L717.4 422.0 L719.4 423.2 L721.6 424.1 L734.6 424.1 L735.7 425.9 L736.7 427.6 L737.6 426.2 L738.3 421.9 L739.0 415.7 L739.6 414.4 L740.6 408.2 L741.4 405.4 L742.4 405.4 L743.1 409.1 L743.7 412.9 L744.4 416.6 L745.2 422.2 L746.1 427.1 L746.8 429.1 L747.5 428.1 L748.2 425.1 L748.9 424.1 L750.4 423.2 L752.0 424.9 L753.6 423.2 L755.2 423.2 L756.8 423.4 L759.4 424.1 L761.4 423.4 L765.9 423.0 L768.9 422.5 L771.9 421.9 L774.9 421.1 L777.9 420.0 L780.4 419.0 L782.4 418.6 L783.9 418.8 L786.4 419.4 L788.4 421.1 L790.4 423.0 L791.9 423.8 L793.4 424.1 L795.4 424.8 L797.6 424.1 L801.6 423.5 L803.8 423.6 L806.9 424.1 L810.9 424.1 L814.0 424.8 L816.2 423.5 L819.3 423.5 L822.4 424.1 L824.6 424.1 L826.8 423.6 L829.9 423.6 L833.0 423.5 L838.3 424.1 L840.3 423.1 L842.3 422.0 L844.3 421.2 L845.8 421.1 L847.3 421.2 L849.3 422.0 L851.3 423.2 L853.5 424.1 L866.5 424.1 L867.6 425.9 L868.6 427.6 L869.5 426.2 L870.2 421.9 L870.9 415.7 L871.5 414.4 L872.5 408.2 L873.3 405.4 L874.3 405.4 L875.0 409.1 L875.6 412.9 L876.3 416.6 L877.1 422.2 L878.0 427.1 L878.7 429.1 L879.4 428.1 L880.1 425.1 L880.8 424.1 L882.3 423.8 L885.1 424.9 L886.7 423.2 L888.9 423.8 L891.3 424.1 L893.3 423.4 L897.8 423.0 L900.8 422.5 L903.8 421.9 L906.8 421.1 L909.8 420.0 L912.3 419.0 L914.3 418.6 L915.8 418.8 L918.3 419.4 L920.3 421.1 L922.3 423.0 L923.8 423.8 L925.3 424.1 L927.3 424.5 L929.5 424.5 L932.6 423.6 L934.8 423.6 L937.9 424.5 L941.0 424.1 L944.1 424.1 L948.1 424.5 L952.1 424.1 L956.1 424.1 L960.1 424.1 L962.3 423.5 L966.3 424.1 L970.5 424.1 L972.5 423.1 L974.5 422.0 L976.5 421.2 L978.0 421.1 L979.5 421.2 L981.5 422.0 L983.5 423.2 L985.7 424.1 L998.7 424.1 L999.8 425.9 L1000.8 427.6 L1001.7 426.2 L1002.4 421.9 L1003.1 415.7 L1003.7 414.4 L1004.7 408.2 L1005.5 405.4 L1006.5 405.4 L1007.2 409.1 L1007.8 412.9 L1008.5 416.6 L1009.3 422.2 L1010.2 427.1 L1010.9 429.1 L1011.6 428.1 L1012.3 425.1 L1013.0 424.1 L1014.5 423.2 L1016.7 423.4 L1019.5 424.9 L1021.1 423.4 L1023.5 424.1 L1025.5 423.4 L1030.0 423.0 L1033.0 422.5 L1036.0 421.9 L1039.0 421.1 L1042.0 420.0 L1044.5 419.0 L1046.5 418.6 L1048.0 418.8 L1050.5 419.4 L1052.5 421.1 L1054.5 423.0 L1056.0 423.8 L1057.5 424.1 L1059.5 424.1 L1061.7 423.6 L1065.7 424.1 L1068.8 423.6 L1071.9 424.1 L1074.1 424.1 L1076.3 424.1 L1079.4 424.1 L1082.5 424.1 L1085.6 424.5 L1089.6 424.8 L1092.7 423.6 L1095.8 423.6 L1098.0 423.6 L1101.7 424.1 L1103.7 423.1 L1105.7 422.0 L1107.7 421.2 L1109.2 421.1 L1110.7 421.2 L1112.7 422.0 L1114.7 423.2 L1116.9 424.1 L1129.9 424.1 L1131.0 425.9 L1132.0 427.6 L1132.9 426.2 L1133.6 421.9 L1134.3 415.7 L1134.9 414.4 L1135.9 408.2 L1136.7 405.4 L1137.7 405.4 L1138.4 409.1 L1139.0 412.9 L1139.7 416.6 L1140.5 422.2 L1141.4 427.1 L1142.1 429.1 L1142.8 428.1 L1143.5 425.1 L1144.2 424.1 L1145.7 424.6 L1148.5 423.8 L1150.7 423.8 L1152.9 423.4 L1154.7 424.1 L1156.7 423.4 L1161.2 423.0 L1164.2 422.5 L1167.2 421.9 L1170.2 421.1 L1173.2 420.0 L1175.7 419.0 L1177.7 418.6 L1179.2 418.8 L1181.7 419.4 L1183.7 421.1 L1185.7 423.0 L1187.2 423.8 L1188.7 424.1 L1198.0 424.1"/>
<path d="M3.0 487.9 L49.3 487.9 L51.3 487.0 L53.3 486.1 L55.3 485.5 L56.8 485.4 L58.3 485.5 L60.3 486.1 L62.3 487.1 L64.5 487.9 L79.3 487.9 L81.3 484.8 L83.2 480.9 L85.4 480.9 L86.0 485.8 L86.8 491.9 L87.6 496.7 L88.2 498.3 L88.8 503.9 L89.8 503.9 L90.4 495.9 L91.1 493.5 L91.8 487.1 L92.6 487.9 L102.3 487.9 L104.3 487.6 L108.8 487.4 L111.8 487.1 L114.8 486.9 L117.8 486.5 L120.8 486.0 L123.3 485.6 L125.3 485.4 L126.8 485.5 L129.3 485.8 L131.3 486.5 L133.3 487.4 L134.8 487.8 L136.3 487.9 L180.8 487.9 L182.8 487.0 L184.8 486.1 L186.8 485.5 L188.3 485.4 L189.8 485.5 L191.8 486.1 L193.8 487.1 L196.0 487.9 L210.8 487.9 L212.8 484.8 L214.7 480.9 L216.9 480.9 L217.5 485.8 L218.3 491.9 L219.1 496.7 L219.7 498.3 L220.3 503.9 L221.3 503.9 L221.9 495.9 L222.6 493.5 L223.3 487.1 L224.1 487.9 L233.8 487.9 L235.8 487.6 L240.3 487.4 L243.3 487.1 L246.3 486.9 L249.3 486.5 L252.3 486.0 L254.8 485.6 L256.8 485.4 L258.3 485.5 L260.8 485.8 L262.8 486.5 L264.8 487.4 L266.3 487.8 L267.8 487.9 L312.2 487.9 L314.2 487.0 L316.2 486.1 L318.2 485.5 L319.7 485.4 L321.2 485.5 L323.2 486.1 L325.2 487.1 L327.4 487.9 L342.2 487.9 L344.2 484.8 L346.1 480.9 L348.3 480.9 L348.9 485.8 L349.7 491.9 L350.5 496.7 L351.1 498.3 L351.7 503.9 L352.7 503.9 L353.3 495.9 L354.0 493.5 L354.7 487.1 L355.5 487.9 L365.2 487.9 L367.2 487.6 L371.7 487.4 L374.7 487.1 L377.7 486.9 L380.7 486.5 L383.7 486.0 L386.2 485.6 L388.2 485.4 L389.7 485.5 L392.2 485.8 L394.2 486.5 L396.2 487.4 L397.7 487.8 L399.2 487.9 L443.5 487.9 L445.5 487.0 L447.5 486.1 L449.5 485.5 L451.0 485.4 L452.5 485.5 L454.5 486.1 L456.5 487.1 L458.7 487.9 L473.5 487.9 L475.5 484.8 L477.4 480.9 L479.6 480.9 L480.2 485.8 L481.0 491.9 L481.8 496.7 L482.4 498.3 L483.0 503.9 L484.0 503.9 L484.6 495.9 L485.3 493.5 L486.0 487.1 L486.8 487.9 L496.5 487.9 L498.5 487.6 L503.0 487.4 L506.0 487.1 L509.0 486.9 L512.0 486.5 L515.0 486.0 L517.5 485.6 L519.5 485.4 L521.0 485.5 L523.5 485.8 L525.5 486.5 L527.5 487.4 L529.0 487.8 L530.5 487.9 L574.9 487.9 L576.9 487.0 L578.9 486.1 L580.9 485.5 L582.4 485.4 L583.9 485.5 L585.9 486.1 L587.9 487.1 L590.1 487.9 L604.9 487.9 L606.9 484.8 L608.8 480.9 L611.0 480.9 L611.6 485.8 L612.4 491.9 L613.2 496.7 L613.8 498.3 L614.4 503.9 L615.4 503.9 L616.0 495.9 L616.7 493.5 L617.4 487.1 L618.2 487.9 L627.9 487.9 L629.9 487.6 L634.4 487.4 L637.4 487.1 L640.4 486.9 L643.4 486.5 L646.4 486.0 L648.9 485.6 L650.9 485.4 L652.4 485.5 L654.9 485.8 L656.9 486.5 L658.9 487.4 L660.4 487.8 L661.9 487.9 L706.4 487.9 L708.4 487.0 L710.4 486.1 L712.4 485.5 L713.9 485.4 L715.4 485.5 L717.4 486.1 L719.4 487.1 L721.6 487.9 L736.4 487.9 L738.4 484.8 L740.3 480.9 L742.5 480.9 L743.1 485.8 L743.9 491.9 L744.7 496.7 L745.3 498.3 L745.9 503.9 L746.9 503.9 L747.5 495.9 L748.2 493.5 L748.9 487.1 L749.7 487.9 L759.4 487.9 L761.4 487.6 L765.9 487.4 L768.9 487.1 L771.9 486.9 L774.9 486.5 L777.9 486.0 L780.4 485.6 L782.4 485.4 L783.9 485.5 L786.4 485.8 L788.4 486.5 L790.4 487.4 L791.9 487.8 L793.4 487.9 L838.3 487.9 L840.3 487.0 L842.3 486.1 L844.3 485.5 L845.8 485.4 L847.3 485.5 L849.3 486.1 L851.3 487.1 L853.5 487.9 L868.3 487.9 L870.3 484.8 L872.2 480.9 L874.4 480.9 L875.0 485.8 L875.8 491.9 L876.6 496.7 L877.2 498.3 L877.8 503.9 L878.8 503.9 L879.4 495.9 L880.1 493.5 L880.8 487.1 L881.6 487.9 L891.3 487.9 L893.3 487.6 L897.8 487.4 L900.8 487.1 L903.8 486.9 L906.8 486.5 L909.8 486.0 L912.3 485.6 L914.3 485.4 L915.8 485.5 L918.3 485.8 L920.3 486.5 L922.3 487.4 L923.8 487.8 L925.3 487.9 L970.5 487.9 L972.5 487.0 L974.5 486.1 L976.5 485.5 L978.0 485.4 L979.5 485.5 L981.5 486.1 L983.5 487.1 L985.7 487.9 L1000.5 487.9 L1002.5 484.8 L1004.4 480.9 L1006.6 480.9 L1007.2 485.8 L1008.0 491.9 L1008.8 496.7 L1009.4 498.3 L1010.0 503.9 L1011.0 503.9 L1011.6 495.9 L1012.3 493.5 L1013.0 487.1 L1013.8 487.9 L1023.5 487.9 L1025.5 487.6 L1030.0 487.4 L1033.0 487.1 L1036.0 486.9 L1039.0 486.5 L1042.0 486.0 L1044.5 485.6 L1046.5 485.4 L1048.0 485.5 L1050.5 485.8 L1052.5 486.5 L1054.5 487.4 L1056.0 487.8 L1057.5 487.9 L1101.7 487.9 L1103.7 487.0 L1105.7 486.1 L1107.7 485.5 L1109.2 485.4 L1110.7 485.5 L1112.7 486.1 L1114.7 487.1 L1116.9 487.9 L1131.7 487.9 L1133.7 484.8 L1135.6 480.9 L1137.8 480.9 L1138.4 485.8 L1139.2 491.9 L1140.0 496.7 L1140.6 498.3 L1141.2 503.9 L1142.2 503.9 L1142.8 495.9 L1143.5 493.5 L1144.2 487.1 L1145.0 487.9 L1154.7 487.9 L1156.7 487.6 L1161.2 487.4 L1164.2 487.1 L1167.2 486.9 L1170.2 486.5 L1173.2 486.0 L1175.7 485.6 L1177.7 485.4 L1179.2 485.5 L1181.7 485.8 L1183.7 486.5 L1185.7 487.4 L1187.2 487.8 L1188.7 487.9 L1198.0 487.9"/>
<path d="M3.0 552.3 L49.3 552.3 L51.3 551.4 L53.3 550.5 L55.3 549.9 L56.8 549.8 L58.3 549.9 L60.3 550.5 L62.3 551.5 L64.5 552.3 L79.3 552.3 L81.3 546.0 L83.2 538.3 L85.4 538.3 L86.0 548.1 L86.8 558.5 L87.6 566.0 L88.2 568.5 L88.8 577.3 L89.8 577.3 L90.4 564.8 L91.1 561.0 L91.8 551.0 L92.6 552.3 L102.3 552.3 L104.3 551.9 L108.8 551.6 L111.8 551.2 L114.8 550.9 L117.8 550.4 L120.8 549.7 L123.3 549.0 L125.3 548.8 L126.8 548.9 L129.3 549.3 L131.3 550.4 L133.3 551.6 L134.8 552.1 L136.3 552.3 L180.8 552.3 L182.8 551.4 L184.8 550.5 L186.8 549.9 L188.3 549.8 L189.8 549.9 L191.8 550.5 L193.8 551.5 L196.0 552.3 L210.8 552.3 L212.8 546.0 L214.7 538.3 L216.9 538.3 L217.5 548.1 L218.3 558.5 L219.1 566.0 L219.7 568.5 L220.3 577.3 L221.3 577.3 L221.9 564.8 L222.6 561.0 L223.3 551.0 L224.1 552.3 L233.8 552.3 L235.8 551.9 L240.3 551.6 L243.3 551.2 L246.3 550.9 L249.3 550.4 L252.3 549.7 L254.8 549.0 L256.8 548.8 L258.3 548.9 L260.8 549.3 L262.8 550.4 L264.8 551.6 L266.3 552.1 L267.8 552.3 L312.2 552.3 L314.2 551.4 L316.2 550.5 L318.2 549.9 L319.7 549.8 L321.2 549.9 L323.2 550.5 L325.2 551.5 L327.4 552.3 L342.2 552.3 L344.2 546.0 L346.1 538.3 L348.3 538.3 L348.9 548.1 L349.7 558.5 L350.5 566.0 L351.1 568.5 L351.7 577.3 L352.7 577.3 L353.3 564.8 L354.0 561.0 L354.7 551.0 L355.5 552.3 L365.2 552.3 L367.2 551.9 L371.7 551.6 L374.7 551.2 L377.7 550.9 L380.7 550.4 L383.7 549.7 L386.2 549.0 L388.2 548.8 L389.7 548.9 L392.2 549.3 L394.2 550.4 L396.2 551.6 L397.7 552.1 L399.2 552.3 L443.5 552.3 L445.5 551.4 L447.5 550.5 L449.5 549.9 L451.0 549.8 L452.5 549.9 L454.5 550.5 L456.5 551.5 L458.7 552.3 L473.5 552.3 L475.5 546.0 L477.4 538.3 L479.6 538.3 L480.2 548.1 L481.0 558.5 L481.8 566.0 L482.4 568.5 L483.0 577.3 L484.0 577.3 L484.6 564.8 L485.3 561.0 L486.0 551.0 L486.8 552.3 L496.5 552.3 L498.5 551.9 L503.0 551.6 L506.0 551.2 L509.0 550.9 L512.0 550.4 L515.0 549.7 L517.5 549.0 L519.5 548.8 L521.0 548.9 L523.5 549.3 L525.5 550.4 L527.5 551.6 L529.0 552.1 L530.5 552.3 L574.9 552.3 L576.9 551.4 L578.9 550.5 L580.9 549.9 L582.4 549.8 L583.9 549.9 L585.9 550.5 L587.9 551.5 L590.1 552.3 L604.9 552.3 L606.9 546.0 L608.8 538.3 L611.0 538.3 L611.6 548.1 L612.4 558.5 L613.2 566.0 L613.8 568.5 L614.4 577.3 L615.4 577.3 L616.0 564.8 L616.7 561.0 L617.4 551.0 L618.2 552.3 L627.9 552.3 L629.9 551.9 L634.4 551.6 L637.4 551.2 L640.4 550.9 L643.4 550.4 L646.4 549.7 L648.9 549.0 L650.9 548.8 L652.4 548.9 L654.9 549.3 L656.9 550.4 L658.9 551.6 L660.4 552.1 L661.9 552.3 L706.4 552.3 L708.4 551.4 L710.4 550.5 L712.4 549.9 L713.9 549.8 L715.4 549.9 L717.4 550.5 L719.4 551.5 L721.6 552.3 L736.4 552.3 L738.4 546.0 L740.3 538.3 L742.5 538.3 L743.1 548.1 L743.9 558.5 L744.7 566.0 L745.3 568.5 L745.9 577.3 L746.9 577.3 L747.5 564.8 L748.2 561.0 L748.9 551.0 L749.7 552.3 L759.4 552.3 L761.4 551.9 L765.9 551.6 L768.9 551.2 L771.9 550.9 L774.9 550.4 L777.9 549.7 L780.4 549.0 L782.4 548.8 L783.9 548.9 L786.4 549.3 L788.4 550.4 L790.4 551.6 L791.9 552.1 L793.4 552.3 L838.3 552.3 L840.3 551.4 L842.3 550.5 L844.3 549.9 L845.8 549.8 L847.3 549.9 L849.3 550.5 L851.3 551.5 L853.5 552.3 L868.3 552.3 L870.3 546.0 L872.2 538.3 L874.4 538.3 L875.0 548.1 L875.8 558.5 L876.6 566.0 L877.2 568.5 L877.8 577.3 L878.8 577.3 L879.4 564.8 L880.1 561.0 L880.8 551.0 L881.6 552.3 L891.3 552.3 L893.3 551.9 L897.8 551.6 L900.8 551.2 L903.8 550.9 L906.8 550.4 L909.8 549.7 L912.3 549.0 L914.3 548.8 L915.8 548.9 L918.3 549.3 L920.3 550.4 L922.3 551.6 L923.8 552.1 L925.3 552.3 L970.5 552.3 L972.5 551.4 L974.5 550.5 L976.5 549.9 L978.0 549.8 L979.5 549.9 L981.5 550.5 L983.5 551.5 L985.7 552.3 L1000.5 552.3 L1002.5 546.0 L1004.4 538.3 L1006.6 538.3 L1007.2 548.1 L1008.0 558.5 L1008.8 566.0 L1009.4 568.5 L1010.0 577.3 L1011.0 577.3 L1011.6 564.8 L1012.3 561.0 L1013.0 551.0 L1013.8 552.3 L1023.5 552.3 L1025.5 551.9 L1030.0 551.6 L1033.0 551.2 L1036.0 550.9 L1039.0 550.4 L1042.0 549.7 L1044.5 549.0 L1046.5 548.8 L1048.0 548.9 L1050.5 549.3 L1052.5 550.4 L1054.5 551.6 L1056.0 552.1 L1057.5 552.3 L1101.7 552.3 L1103.7 551.4 L1105.7 550.5 L1107.7 549.9 L1109.2 549.8 L1110.7 549.9 L1112.7 550.5 L1114.7 551.5 L1116.9 552.3 L1131.7 552.3 L1133.7 546.0 L1135.6 538.3 L1137.8 538.3 L1138.4 548.1 L1139.2 558.5 L1140.0 566.0 L1140.6 568.5 L1141.2 577.3 L1142.2 577.3 L1142.8 564.8 L1143.5 561.0 L1144.2 551.0 L1145.0 552.3 L1154.7 552.3 L1156.7 551.9 L1161.2 551.6 L1164.2 551.2 L1167.2 550.9 L1170.2 550.4 L1173.2 549.7 L1175.7 549.0 L1177.7 548.8 L1179.2 548.9 L1181.7 549.3 L1183.7 550.4 L1185.7 551.6 L1187.2 552.1 L1188.7 552.3 L1198.0 552.3"/>
<path d="M3.0 618.2 L49.3 618.2 L51.8 616.6 L53.8 615.7 L55.8 615.2 L59.8 615.2 L61.3 615.8 L63.3 617.5 L64.5 618.2 L77.5 618.2 L78.6 618.7 L79.6 619.2 L80.5 618.8 L81.2 614.6 L81.9 604.7 L82.5 602.6 L83.5 592.7 L84.3 588.2 L85.3 588.2 L86.0 594.2 L86.6 600.2 L87.3 606.2 L88.1 615.2 L89.0 629.0 L89.7 636.2 L90.4 632.6 L91.1 621.8 L91.8 618.2 L102.3 618.2 L104.3 617.1 L108.8 616.8 L110.8 616.0 L114.8 615.3 L117.8 614.0 L120.8 612.6 L123.8 611.2 L129.8 611.2 L131.8 613.3 L134.3 616.8 L136.3 618.2 L180.8 618.2 L183.3 616.6 L185.3 615.7 L187.3 615.2 L191.3 615.2 L192.8 615.8 L194.8 617.5 L196.0 618.2 L209.0 618.2 L210.1 618.7 L211.1 619.2 L212.0 618.8 L212.7 614.6 L213.4 604.7 L214.0 602.6 L215.0 592.7 L215.8 588.2 L216.8 588.2 L217.5 594.2 L218.1 600.2 L218.8 606.2 L219.6 615.2 L220.5 629.0 L221.2 636.2 L221.9 632.6 L222.6 621.8 L223.3 618.2 L233.8 618.2 L235.8 617.1 L240.3 616.8 L242.3 616.0 L246.3 615.3 L249.3 614.0 L252.3 612.6 L255.3 611.2 L261.3 611.2 L263.3 613.3 L265.8 616.8 L267.8 618.2 L312.2 618.2 L314.7 616.6 L316.7 615.7 L318.7 615.2 L322.7 615.2 L324.2 615.8 L326.2 617.5 L327.4 618.2 L340.4 618.2 L341.5 618.7 L342.5 619.2 L343.4 618.8 L344.1 614.6 L344.8 604.7 L345.4 602.6 L346.4 592.7 L347.2 588.2 L348.2 588.2 L348.9 594.2 L349.5 600.2 L350.2 606.2 L351.0 615.2 L351.9 629.0 L352.6 636.2 L353.3 632.6 L354.0 621.8 L354.7 618.2 L365.2 618.2 L367.2 617.1 L371.7 616.8 L373.7 616.0 L377.7 615.3 L380.7 614.0 L383.7 612.6 L386.7 611.2 L392.7 611.2 L394.7 613.3 L397.2 616.8 L399.2 618.2 L443.5 618.2 L446.0 616.6 L448.0 615.7 L450.0 615.2 L454.0 615.2 L455.5 615.8 L457.5 617.5 L458.7 618.2 L471.7 618.2 L472.8 618.7 L473.8 619.2 L474.7 618.8 L475.4 614.6 L476.1 604.7 L476.7 602.6 L477.7 592.7 L478.5 588.2 L479.5 588.2 L480.2 594.2 L480.8 600.2 L481.5 606.2 L482.3 615.2 L483.2 629.0 L483.9 636.2 L484.6 632.6 L485.3 621.8 L486.0 618.2 L496.5 618.2 L498.5 617.1 L503.0 616.8 L505.0 616.0 L509.0 615.3 L512.0 614.0 L515.0 612.6 L518.0 611.2 L524.0 611.2 L526.0 613.3 L528.5 616.8 L530.5 618.2 L574.9 618.2 L577.4 616.6 L579.4 615.7 L581.4 615.2 L585.4 615.2 L586.9 615.8 L588.9 617.5 L590.1 618.2 L603.1 618.2 L604.2 618.7 L605.2 619.2 L606.1 618.8 L606.8 614.6 L607.5 604.7 L608.1 602.6 L609.1 592.7 L609.9 588.2 L610.9 588.2 L611.6 594.2 L612.2 600.2 L612.9 606.2 L613.7 615.2 L614.6 629.0 L615.3 636.2 L616.0 632.6 L616.7 621.8 L617.4 618.2 L627.9 618.2 L629.9 617.1 L634.4 616.8 L636.4 616.0 L640.4 615.3 L643.4 614.0 L646.4 612.6 L649.4 611.2 L655.4 611.2 L657.4 613.3 L659.9 616.8 L661.9 618.2 L706.4 618.2 L708.9 616.6 L710.9 615.7 L712.9 615.2 L716.9 615.2 L718.4 615.8 L720.4 617.5 L721.6 618.2 L734.6 618.2 L735.7 618.7 L736.7 619.2 L737.6 618.8 L738.3 614.6 L739.0 604.7 L739.6 602.6 L740.6 592.7 L741.4 588.2 L742.4 588.2 L743.1 594.2 L743.7 600.2 L744.4 606.2 L745.2 615.2 L746.1 629.0 L746.8 636.2 L747.5 632.6 L748.2 621.8 L748.9 618.2 L759.4 618.2 L761.4 617.1 L765.9 616.8 L767.9 616.0 L771.9 615.3 L774.9 614.0 L777.9 612.6 L780.9 611.2 L786.9 611.2 L788.9 613.3 L791.4 616.8 L793.4 618.2 L838.3 618.2 L840.8 616.6 L842.8 615.7 L844.8 615.2 L848.8 615.2 L850.3 615.8 L852.3 617.5 L853.5 618.2 L866.5 618.2 L867.6 618.7 L868.6 619.2 L869.5 618.8 L870.2 614.6 L870.9 604.7 L871.5 602.6 L872.5 592.7 L873.3 588.2 L874.3 588.2 L875.0 594.2 L875.6 600.2 L876.3 606.2 L877.1 615.2 L878.0 629.0 L878.7 636.2 L879.4 632.6 L880.1 621.8 L880.8 618.2 L891.3 618.2 L893.3 617.1 L897.8 616.8 L899.8 616.0 L903.8 615.3 L906.8 614.0 L909.8 612.6 L912.8 611.2 L918.8 611.2 L920.8 613.3 L923.3 616.8 L925.3 618.2 L970.5 618.2 L973.0 616.6 L975.0 615.7 L977.0 615.2 L981.0 615.2 L982.5 615.8 L984.5 617.5 L985.7 618.2 L998.7 618.2 L999.8 618.7 L1000.8 619.2 L1001.7 618.8 L1002.4 614.6 L1003.1 604.7 L1003.7 602.6 L1004.7 592.7 L1005.5 588.2 L1006.5 588.2 L1007.2 594.2 L1007.8 600.2 L1008.5 606.2 L1009.3 615.2 L1010.2 629.0 L1010.9 636.2 L1011.6 632.6 L1012.3 621.8 L1013.0 618.2 L1023.5 618.2 L1025.5 617.1 L1030.0 616.8 L1032.0 616.0 L1036.0 615.3 L1039.0 614.0 L1042.0 612.6 L1045.0 611.2 L1051.0 611.2 L1053.0 613.3 L1055.5 616.8 L1057.5 618.2 L1101.7 618.2 L1104.2 616.6 L1106.2 615.7 L1108.2 615.2 L1112.2 615.2 L1113.7 615.8 L1115.7 617.5 L1116.9 618.2 L1129.9 618.2 L1131.0 618.7 L1132.0 619.2 L1132.9 618.8 L1133.6 614.6 L1134.3 604.7 L1134.9 602.6 L1135.9 592.7 L1136.7 588.2 L1137.7 588.2 L1138.4 594.2 L1139.0 600.2 L1139.7 606.2 L1140.5 615.2 L1141.4 629.0 L1142.1 636.2 L1142.8 632.6 L1143.5 621.8 L1144.2 618.2 L1154.7 618.2 L1156.7 617.1 L1161.2 616.8 L1163.2 616.0 L1167.2 615.3 L1170.2 614.0 L1173.2 612.6 L1176.2 611.2 L1182.2 611.2 L1184.2 613.3 L1186.7 616.8 L1188.7 618.2 L1198.0 618.2"/>
<path d="M3.0 683.4 L49.3 683.4 L51.3 681.6 L53.3 679.9 L55.3 678.6 L56.8 678.4 L58.3 678.6 L60.3 679.9 L62.3 681.9 L64.5 683.4 L77.5 683.4 L78.6 684.6 L79.6 685.9 L80.5 684.9 L81.2 679.0 L81.9 666.8 L82.5 664.2 L83.5 651.9 L84.3 646.4 L85.3 646.4 L86.0 653.8 L86.6 661.2 L87.3 668.6 L88.1 679.7 L89.0 688.2 L89.7 691.4 L90.4 689.8 L91.1 685.0 L91.8 683.4 L102.3 683.4 L104.3 682.1 L108.8 681.3 L111.8 680.2 L114.8 679.2 L117.8 677.6 L120.8 675.5 L123.3 673.6 L125.3 672.9 L126.8 673.2 L129.3 674.5 L131.3 677.6 L133.3 681.3 L134.8 682.9 L136.3 683.4 L180.8 683.4 L182.8 681.6 L184.8 679.9 L186.8 678.6 L188.3 678.4 L189.8 678.6 L191.8 679.9 L193.8 681.9 L196.0 683.4 L209.0 683.4 L210.1 684.6 L211.1 685.9 L212.0 684.9 L212.7 679.0 L213.4 666.8 L214.0 664.2 L215.0 651.9 L215.8 646.4 L216.8 646.4 L217.5 653.8 L218.1 661.2 L218.8 668.6 L219.6 679.7 L220.5 688.2 L221.2 691.4 L221.9 689.8 L222.6 685.0 L223.3 683.4 L233.8 683.4 L235.8 682.1 L240.3 681.3 L243.3 680.2 L246.3 679.2 L249.3 677.6 L252.3 675.5 L254.8 673.6 L256.8 672.9 L258.3 673.2 L260.8 674.5 L262.8 677.6 L264.8 681.3 L266.3 682.9 L267.8 683.4 L312.2 683.4 L314.2 681.6 L316.2 679.9 L318.2 678.6 L319.7 678.4 L321.2 678.6 L323.2 679.9 L325.2 681.9 L327.4 683.4 L340.4 683.4 L341.5 684.6 L342.5 685.9 L343.4 684.9 L344.1 679.0 L344.8 666.8 L345.4 664.2 L346.4 651.9 L347.2 646.4 L348.2 646.4 L348.9 653.8 L349.5 661.2 L350.2 668.6 L351.0 679.7 L351.9 688.2 L352.6 691.4 L353.3 689.8 L354.0 685.0 L354.7 683.4 L365.2 683.4 L367.2 682.1 L371.7 681.3 L374.7 680.2 L377.7 679.2 L380.7 677.6 L383.7 675.5 L386.2 673.6 L388.2 672.9 L389.7 673.2 L392.2 674.5 L394.2 677.6 L396.2 681.3 L397.7 682.9 L399.2 683.4 L443.5 683.4 L445.5 681.6 L447.5 679.9 L449.5 678.6 L451.0 678.4 L452.5 678.6 L454.5 679.9 L456.5 681.9 L458.7 683.4 L471.7 683.4 L472.8 684.6 L473.8 685.9 L474.7 684.9 L475.4 679.0 L476.1 666.8 L476.7 664.2 L477.7 651.9 L478.5 646.4 L479.5 646.4 L480.2 653.8 L480.8 661.2 L481.5 668.6 L482.3 679.7 L483.2 688.2 L483.9 691.4 L484.6 689.8 L485.3 685.0 L486.0 683.4 L496.5 683.4 L498.5 682.1 L503.0 681.3 L506.0 680.2 L509.0 679.2 L512.0 677.6 L515.0 675.5 L517.5 673.6 L519.5 672.9 L521.0 673.2 L523.5 674.5 L525.5 677.6 L527.5 681.3 L529.0 682.9 L530.5 683.4 L574.9 683.4 L576.9 681.6 L578.9 679.9 L580.9 678.6 L582.4 678.4 L583.9 678.6 L585.9 679.9 L587.9 681.9 L590.1 683.4 L603.1 683.4 L604.2 684.6 L605.2 685.9 L606.1 684.9 L606.8 679.0 L607.5 666.8 L608.1 664.2 L609.1 651.9 L609.9 646.4 L610.9 646.4 L611.6 653.8 L612.2 661.2 L612.9 668.6 L613.7 679.7 L614.6 688.2 L615.3 691.4 L616.0 689.8 L616.7 685.0 L617.4 683.4 L627.9 683.4 L629.9 682.1 L634.4 681.3 L637.4 680.2 L640.4 679.2 L643.4 677.6 L646.4 675.5 L648.9 673.6 L650.9 672.9 L652.4 673.2 L654.9 674.5 L656.9 677.6 L658.9 681.3 L660.4 682.9 L661.9 683.4 L706.4 683.4 L708.4 681.6 L710.4 679.9 L712.4 678.6 L713.9 678.4 L715.4 678.6 L717.4 679.9 L719.4 681.9 L721.6 683.4 L734.6 683.4 L735.7 684.6 L736.7 685.9 L737.6 684.9 L738.3 679.0 L739.0 666.8 L739.6 664.2 L740.6 651.9 L741.4 646.4 L742.4 646.4 L743.1 653.8 L743.7 661.2 L744.4 668.6 L745.2 679.7 L746.1 688.2 L746.8 691.4 L747.5 689.8 L748.2 685.0 L748.9 683.4 L759.4 683.4 L761.4 682.1 L765.9 681.3 L768.9 680.2 L771.9 679.2 L774.9 677.6 L777.9 675.5 L780.4 673.6 L782.4 672.9 L783.9 673.2 L786.4 674.5 L788.4 677.6 L790.4 681.3 L791.9 682.9 L793.4 683.4 L838.3 683.4 L840.3 681.6 L842.3 679.9 L844.3 678.6 L845.8 678.4 L847.3 678.6 L849.3 679.9 L851.3 681.9 L853.5 683.4 L866.5 683.4 L867.6 684.6 L868.6 685.9 L869.5 684.9 L870.2 679.0 L870.9 666.8 L871.5 664.2 L872.5 651.9 L873.3 646.4 L874.3 646.4 L875.0 653.8 L875.6 661.2 L876.3 668.6 L877.1 679.7 L878.0 688.2 L878.7 691.4 L879.4 689.8 L880.1 685.0 L880.8 683.4 L891.3 683.4 L893.3 682.1 L897.8 681.3 L900.8 680.2 L903.8 679.2 L906.8 677.6 L909.8 675.5 L912.3 673.6 L914.3 672.9 L915.8 673.2 L918.3 674.5 L920.3 677.6 L922.3 681.3 L923.8 682.9 L925.3 683.4 L970.5 683.4 L972.5 681.6 L974.5 679.9 L976.5 678.6 L978.0 678.4 L979.5 678.6 L981.5 679.9 L983.5 681.9 L985.7 683.4 L998.7 683.4 L999.8 684.6 L1000.8 685.9 L1001.7 684.9 L1002.4 679.0 L1003.1 666.8 L1003.7 664.2 L1004.7 651.9 L1005.5 646.4 L1006.5 646.4 L1007.2 653.8 L1007.8 661.2 L1008.5 668.6 L1009.3 679.7 L1010.2 688.2 L1010.9 691.4 L1011.6 689.8 L1012.3 685.0 L1013.0 683.4 L1023.5 683.4 L1025.5 682.1 L1030.0 681.3 L1033.0 680.2 L1036.0 679.2 L1039.0 677.6 L1042.0 675.5 L1044.5 673.6 L1046.5 672.9 L1048.0 673.2 L1050.5 674.5 L1052.5 677.6 L1054.5 681.3 L1056.0 682.9 L1057.5 683.4 L1101.7 683.4 L1103.7 681.6 L1105.7 679.9 L1107.7 678.6 L1109.2 678.4 L1110.7 678.6 L1112.7 679.9 L1114.7 681.9 L1116.9 683.4 L1129.9 683.4 L1131.0 684.6 L1132.0 685.9 L1132.9 684.9 L1133.6 679.0 L1134.3 666.8 L1134.9 664.2 L1135.9 651.9 L1136.7 646.4 L1137.7 646.4 L1138.4 653.8 L1139.0 661.2 L1139.7 668.6 L1140.5 679.7 L1141.4 688.2 L1142.1 691.4 L1142.8 689.8 L1143.5 685.0 L1144.2 683.4 L1154.7 683.4 L1156.7 682.1 L1161.2 681.3 L1164.2 680.2 L1167.2 679.2 L1170.2 677.6 L1173.2 675.5 L1175.7 673.6 L1177.7 672.9 L1179.2 673.2 L1181.7 674.5 L1183.7 677.6 L1185.7 681.3 L1187.2 682.9 L1188.7 683.4 L1198.0 683.4"/>
<path d="M3.0 746.9 L5.0 746.4 L8.1 746.3 L11.2 746.4 L13.4 746.4 L15.6 746.9 L17.8 747.6 L20.0 747.3 L23.1 746.4 L25.3 747.3 L29.3 746.3 L33.3 746.9 L35.5 747.3 L39.5 746.9 L41.7 747.6 L45.7 746.4 L49.3 746.9 L51.3 745.7 L53.3 744.4 L55.3 743.6 L56.8 743.4 L58.3 743.6 L60.3 744.4 L62.3 745.9 L64.5 746.9 L77.5 746.9 L78.6 748.6 L79.6 750.4 L80.5 749.0 L81.2 742.8 L81.9 731.6 L82.5 729.2 L83.5 718.0 L84.3 712.9 L85.3 712.9 L86.0 719.7 L86.6 726.5 L87.3 733.3 L88.1 743.5 L89.0 749.0 L89.7 750.4 L90.4 749.7 L91.1 747.6 L91.8 746.9 L93.3 746.0 L96.1 746.6 L98.3 746.6 L99.9 747.7 L102.3 746.9 L104.3 746.0 L108.8 745.4 L111.8 744.6 L114.8 743.9 L117.8 742.8 L120.8 741.3 L123.3 739.9 L125.3 739.4 L126.8 739.6 L129.3 740.5 L131.3 742.8 L133.3 745.4 L134.8 746.5 L136.3 746.9 L138.3 746.9 L141.4 747.3 L143.6 747.3 L146.7 746.9 L150.7 746.3 L152.9 747.6 L156.9 746.9 L160.0 746.4 L164.0 747.3 L167.1 747.3 L169.3 747.3 L171.5 747.3 L175.5 747.6 L178.6 746.9 L180.8 746.9 L182.8 745.7 L184.8 744.4 L186.8 743.6 L188.3 743.4 L189.8 743.6 L191.8 744.4 L193.8 745.9 L196.0 746.9 L209.0 746.9 L210.1 748.6 L211.1 750.4 L212.0 749.0 L212.7 742.8 L213.4 731.6 L214.0 729.2 L215.0 718.0 L215.8 712.9 L216.8 712.9 L217.5 719.7 L218.1 726.5 L218.8 733.3 L219.6 743.5 L220.5 749.0 L221.2 750.4 L221.9 749.7 L222.6 747.6 L223.3 746.9 L224.8 747.7 L226.4 746.6 L228.0 747.4 L230.8 747.7 L233.8 746.9 L235.8 746.0 L240.3 745.4 L243.3 744.6 L246.3 743.9 L249.3 742.8 L252.3 741.3 L254.8 739.9 L256.8 739.4 L258.3 739.6 L260.8 740.5 L262.8 742.8 L264.8 745.4 L266.3 746.5 L267.8 746.9 L269.8 747.6 L272.9 746.4 L276.9 747.3 L280.9 746.3 L283.1 747.3 L285.3 746.9 L287.5 746.9 L289.7 747.6 L293.7 746.3 L297.7 747.6 L299.9 746.3 L303.0 747.3 L307.0 747.3 L312.2 746.9 L314.2 745.7 L316.2 744.4 L318.2 743.6 L319.7 743.4 L321.2 743.6 L323.2 744.4 L325.2 745.9 L327.4 746.9 L340.4 746.9 L341.5 748.6 L342.5 750.4 L343.4 749.0 L344.1 742.8 L344.8 731.6 L345.4 729.2 L346.4 718.0 L347.2 712.9 L348.2 712.9 L348.9 719.7 L349.5 726.5 L350.2 733.3 L351.0 743.5 L351.9 749.0 L352.6 750.4 L353.3 749.7 L354.0 747.6 L354.7 746.9 L356.2 746.6 L359.0 746.2 L361.2 746.0 L364.0 747.4 L365.2 746.9 L367.2 746.0 L371.7 745.4 L374.7 744.6 L377.7 743.9 L380.7 742.8 L383.7 741.3 L386.2 739.9 L388.2 739.4 L389.7 739.6 L392.2 740.5 L394.2 742.8 L396.2 745.4 L397.7 746.5 L399.2 746.9 L401.2 746.9 L405.2 747.3 L408.3 747.3 L410.5 746.3 L412.7 746.3 L414.9 746.3 L418.0 746.9 L420.2 746.4 L422.4 746.3 L424.6 746.9 L428.6 746.9 L430.8 746.9 L434.8 746.4 L438.8 746.9 L441.0 746.9 L443.5 746.9 L445.5 745.7 L447.5 744.4 L449.5 743.6 L451.0 743.4 L452.5 743.6 L454.5 744.4 L456.5 745.9 L458.7 746.9 L471.7 746.9 L472.8 748.6 L473.8 750.4 L474.7 749.0 L475.4 742.8 L476.1 731.6 L476.7 729.2 L477.7 718.0 L478.5 712.9 L479.5 712.9 L480.2 719.7 L480.8 726.5 L481.5 733.3 L482.3 743.5 L483.2 749.0 L483.9 750.4 L484.6 749.7 L485.3 747.6 L486.0 746.9 L487.5 747.4 L489.1 747.7 L491.3 747.4 L492.9 746.6 L494.5 747.4 L496.5 746.9 L498.5 746.0 L503.0 745.4 L506.0 744.6 L509.0 743.9 L512.0 742.8 L515.0 741.3 L517.5 739.9 L519.5 739.4 L521.0 739.6 L523.5 740.5 L525.5 742.8 L527.5 745.4 L529.0 746.5 L530.5 746.9 L532.5 746.3 L535.6 746.3 L537.8 746.9 L540.9 747.6 L544.9 746.9 L547.1 746.9 L551.1 746.3 L554.2 746.4 L556.4 746.3 L559.5 747.3 L563.5 746.9 L567.5 747.6 L569.7 746.9 L571.9 747.6 L574.9 746.9 L576.9 745.7 L578.9 744.4 L580.9 743.6 L582.4 743.4 L583.9 743.6 L585.9 744.4 L587.9 745.9 L590.1 746.9 L603.1 746.9 L604.2 748.6 L605.2 750.4 L606.1 749.0 L606.8 742.8 L607.5 731.6 L608.1 729.2 L609.1 718.0 L609.9 712.9 L610.9 712.9 L611.6 719.7 L612.2 726.5 L612.9 733.3 L613.7 743.5 L614.6 749.0 L615.3 750.4 L616.0 749.7 L616.7 747.6 L617.4 746.9 L618.9 746.2 L620.5 746.6 L622.7 746.6 L624.9 746.2 L627.1 746.6 L627.9 746.9 L629.9 746.0 L634.4 745.4 L637.4 744.6 L640.4 743.9 L643.4 742.8 L646.4 741.3 L648.9 739.9 L650.9 739.4 L652.4 739.6 L654.9 740.5 L656.9 742.8 L658.9 745.4 L660.4 746.5 L661.9 746.9 L663.9 747.3 L667.9 746.3 L671.9 746.9 L674.1 746.9 L676.3 746.4 L678.5 746.3 L680.7 746.9 L682.9 746.4 L685.1 746.9 L687.3 747.3 L689.5 747.6 L692.6 747.6 L695.7 747.6 L698.8 747.3 L701.9 746.9 L706.4 746.9 L708.4 745.7 L710.4 744.4 L712.4 743.6 L713.9 743.4 L715.4 743.6 L717.4 744.4 L719.4 745.9 L721.6 746.9 L734.6 746.9 L735.7 748.6 L736.7 750.4 L737.6 749.0 L738.3 742.8 L739.0 731.6 L739.6 729.2 L740.6 718.0 L741.4 712.9 L742.4 712.9 L743.1 719.7 L743.7 726.5 L744.4 733.3 L745.2 743.5 L746.1 749.0 L746.8 750.4 L747.5 749.7 L748.2 747.6 L748.9 746.9 L750.4 746.6 L752.0 746.0 L754.8 746.6 L756.4 746.6 L758.6 747.7 L759.4 746.9 L761.4 746.0 L765.9 745.4 L768.9 744.6 L771.9 743.9 L774.9 742.8 L777.9 741.3 L780.4 739.9 L782.4 739.4 L783.9 739.6 L786.4 740.5 L788.4 742.8 L790.4 745.4 L791.9 746.5 L793.4 746.9 L795.4 746.9 L798.5 746.4 L801.6 747.3 L803.8 746.9 L806.9 747.3 L810.9 746.9 L814.0 746.9 L816.2 746.9 L818.4 747.6 L820.6 746.4 L824.6 747.3 L826.8 747.3 L829.9 746.9 L833.0 747.6 L838.3 746.9 L840.3 745.7 L842.3 744.4 L844.3 743.6 L845.8 743.4 L847.3 743.6 L849.3 744.4 L851.3 745.9 L853.5 746.9 L866.5 746.9 L867.6 748.6 L868.6 750.4 L869.5 749.0 L870.2 742.8 L870.9 731.6 L871.5 729.2 L872.5 718.0 L873.3 712.9 L874.3 712.9 L875.0 719.7 L875.6 726.5 L876.3 733.3 L877.1 743.5 L878.0 749.0 L878.7 750.4 L879.4 749.7 L880.1 747.6 L880.8 746.9 L882.3 747.4 L885.1 747.4 L887.9 747.4 L890.7 746.2 L891.3 746.9 L893.3 746.0 L897.8 745.4 L900.8 744.6 L903.8 743.9 L906.8 742.8 L909.8 741.3 L912.3 739.9 L914.3 739.4 L915.8 739.6 L918.3 740.5 L920.3 742.8 L922.3 745.4 L923.8 746.5 L925.3 746.9 L927.3 746.9 L929.5 746.9 L931.7 746.4 L935.7 746.4 L937.9 746.3 L941.0 747.6 L943.2 747.6 L945.4 746.4 L949.4 746.9 L952.5 746.9 L954.7 747.6 L958.7 746.3 L962.7 746.4 L965.8 747.3 L968.0 746.4 L970.5 746.9 L972.5 745.7 L974.5 744.4 L976.5 743.6 L978.0 743.4 L979.5 743.6 L981.5 744.4 L983.5 745.9 L985.7 746.9 L998.7 746.9 L999.8 748.6 L1000.8 750.4 L1001.7 749.0 L1002.4 742.8 L1003.1 731.6 L1003.7 729.2 L1004.7 718.0 L1005.5 712.9 L1006.5 712.9 L1007.2 719.7 L1007.8 726.5 L1008.5 733.3 L1009.3 743.5 L1010.2 749.0 L1010.9 750.4 L1011.6 749.7 L1012.3 747.6 L1013.0 746.9 L1014.5 747.7 L1016.7 746.6 L1018.3 746.2 L1020.5 747.7 L1022.7 746.2 L1023.5 746.9 L1025.5 746.0 L1030.0 745.4 L1033.0 744.6 L1036.0 743.9 L1039.0 742.8 L1042.0 741.3 L1044.5 739.9 L1046.5 739.4 L1048.0 739.6 L1050.5 740.5 L1052.5 742.8 L1054.5 745.4 L1056.0 746.5 L1057.5 746.9 L1059.5 747.3 L1062.6 746.9 L1064.8 746.9 L1067.0 746.9 L1069.2 747.6 L1072.3 746.3 L1074.5 746.3 L1077.6 747.3 L1081.6 746.9 L1083.8 747.3 L1086.0 747.6 L1089.1 747.6 L1091.3 746.3 L1095.3 747.6 L1098.4 747.6 L1101.7 746.9 L1103.7 745.7 L1105.7 744.4 L1107.7 743.6 L1109.2 743.4 L1110.7 743.6 L1112.7 744.4 L1114.7 745.9 L1116.9 746.9 L1129.9 746.9 L1131.0 748.6 L1132.0 750.4 L1132.9 749.0 L1133.6 742.8 L1134.3 731.6 L1134.9 729.2 L1135.9 718.0 L1136.7 712.9 L1137.7 712.9 L1138.4 719.7 L1139.0 726.5 L1139.7 733.3 L1140.5 743.5 L1141.4 749.0 L1142.1 750.4 L1142.8 749.7 L1143.5 747.6 L1144.2 746.9 L1145.7 746.2 L1148.5 746.6 L1150.1 746.0 L1152.9 746.6 L1154.7 746.9 L1156.7 746.0 L1161.2 745.4 L1164.2 744.6 L1167.2 743.9 L1170.2 742.8 L1173.2 741.3 L1175.7 739.9 L1177.7 739.4 L1179.2 739.6 L1181.7 740.5 L1183.7 742.8 L1185.7 745.4 L1187.2 746.5 L1188.7 746.9 L1198.0 746.9"/>
<path d="M3.0 811.4 L49.3 811.4 L51.8 809.8 L53.8 808.9 L55.8 808.4 L59.8 808.4 L61.3 809.0 L63.3 810.6 L64.5 811.4 L77.5 811.4 L78.6 812.6 L79.6 813.9 L80.5 812.9 L81.2 808.5 L81.9 800.4 L82.5 798.7 L83.5 790.6 L84.3 786.9 L85.3 786.9 L86.0 791.8 L86.6 796.7 L87.3 801.6 L88.1 808.9 L89.0 812.9 L89.7 813.9 L90.4 813.4 L91.1 811.9 L91.8 811.4 L102.3 811.4 L104.3 810.4 L108.8 810.2 L110.8 809.5 L114.8 808.9 L117.8 807.8 L120.8 806.6 L123.8 805.4 L129.8 805.4 L131.8 807.2 L134.3 810.2 L136.3 811.4 L180.8 811.4 L183.3 809.8 L185.3 808.9 L187.3 808.4 L191.3 808.4 L192.8 809.0 L194.8 810.6 L196.0 811.4 L209.0 811.4 L210.1 812.6 L211.1 813.9 L212.0 812.9 L212.7 808.5 L213.4 800.4 L214.0 798.7 L215.0 790.6 L215.8 786.9 L216.8 786.9 L217.5 791.8 L218.1 796.7 L218.8 801.6 L219.6 808.9 L220.5 812.9 L221.2 813.9 L221.9 813.4 L222.6 811.9 L223.3 811.4 L233.8 811.4 L235.8 810.4 L240.3 810.2 L242.3 809.5 L246.3 808.9 L249.3 807.8 L252.3 806.6 L255.3 805.4 L261.3 805.4 L263.3 807.2 L265.8 810.2 L267.8 811.4 L312.2 811.4 L314.7 809.8 L316.7 808.9 L318.7 808.4 L322.7 808.4 L324.2 809.0 L326.2 810.6 L327.4 811.4 L340.4 811.4 L341.5 812.6 L342.5 813.9 L343.4 812.9 L344.1 808.5 L344.8 800.4 L345.4 798.7 L346.4 790.6 L347.2 786.9 L348.2 786.9 L348.9 791.8 L349.5 796.7 L350.2 801.6 L351.0 808.9 L351.9 812.9 L352.6 813.9 L353.3 813.4 L354.0 811.9 L354.7 811.4 L365.2 811.4 L367.2 810.4 L371.7 810.2 L373.7 809.5 L377.7 808.9 L380.7 807.8 L383.7 806.6 L386.7 805.4 L392.7 805.4 L394.7 807.2 L397.2 810.2 L399.2 811.4 L443.5 811.4 L446.0 809.8 L448.0 808.9 L450.0 808.4 L454.0 808.4 L455.5 809.0 L457.5 810.6 L458.7 811.4 L471.7 811.4 L472.8 812.6 L473.8 813.9 L474.7 812.9 L475.4 808.5 L476.1 800.4 L476.7 798.7 L477.7 790.6 L478.5 786.9 L479.5 786.9 L480.2 791.8 L480.8 796.7 L481.5 801.6 L482.3 808.9 L483.2 812.9 L483.9 813.9 L484.6 813.4 L485.3 811.9 L486.0 811.4 L496.5 811.4 L498.5 810.4 L503.0 810.2 L505.0 809.5 L509.0 808.9 L512.0 807.8 L515.0 806.6 L518.0 805.4 L524.0 805.4 L526.0 807.2 L528.5 810.2 L530.5 811.4 L574.9 811.4 L577.4 809.8 L579.4 808.9 L581.4 808.4 L585.4 808.4 L586.9 809.0 L588.9 810.6 L590.1 811.4 L603.1 811.4 L604.2 812.6 L605.2 813.9 L606.1 812.9 L606.8 808.5 L607.5 800.4 L608.1 798.7 L609.1 790.6 L609.9 786.9 L610.9 786.9 L611.6 791.8 L612.2 796.7 L612.9 801.6 L613.7 808.9 L614.6 812.9 L615.3 813.9 L616.0 813.4 L616.7 811.9 L617.4 811.4 L627.9 811.4 L629.9 810.4 L634.4 810.2 L636.4 809.5 L640.4 808.9 L643.4 807.8 L646.4 806.6 L649.4 805.4 L655.4 805.4 L657.4 807.2 L659.9 810.2 L661.9 811.4 L706.4 811.4 L708.9 809.8 L710.9 808.9 L712.9 808.4 L716.9 808.4 L718.4 809.0 L720.4 810.6 L721.6 811.4 L734.6 811.4 L735.7 812.6 L736.7 813.9 L737.6 812.9 L738.3 808.5 L739.0 800.4 L739.6 798.7 L740.6 790.6 L741.4 786.9 L742.4 786.9 L743.1 791.8 L743.7 796.7 L744.4 801.6 L745.2 808.9 L746.1 812.9 L746.8 813.9 L747.5 813.4 L748.2 811.9 L748.9 811.4 L759.4 811.4 L761.4 810.4 L765.9 810.2 L767.9 809.5 L771.9 808.9 L774.9 807.8 L777.9 806.6 L780.9 805.4 L786.9 805.4 L788.9 807.2 L791.4 810.2 L793.4 811.4 L838.3 811.4 L840.8 809.8 L842.8 808.9 L844.8 808.4 L848.8 808.4 L850.3 809.0 L852.3 810.6 L853.5 811.4 L866.5 811.4 L867.6 812.6 L868.6 813.9 L869.5 812.9 L870.2 808.5 L870.9 800.4 L871.5 798.7 L872.5 790.6 L873.3 786.9 L874.3 786.9 L875.0 791.8 L875.6 796.7 L876.3 801.6 L877.1 808.9 L878.0 812.9 L878.7 813.9 L879.4 813.4 L880.1 811.9 L880.8 811.4 L891.3 811.4 L893.3 810.4 L897.8 810.2 L899.8 809.5 L903.8 808.9 L906.8 807.8 L909.8 806.6 L912.8 805.4 L918.8 805.4 L920.8 807.2 L923.3 810.2 L925.3 811.4 L970.5 811.4 L973.0 809.8 L975.0 808.9 L977.0 808.4 L981.0 808.4 L982.5 809.0 L984.5 810.6 L985.7 811.4 L998.7 811.4 L999.8 812.6 L1000.8 813.9 L1001.7 812.9 L1002.4 808.5 L1003.1 800.4 L1003.7 798.7 L1004.7 790.6 L1005.5 786.9 L1006.5 786.9 L1007.2 791.8 L1007.8 796.7 L1008.5 801.6 L1009.3 808.9 L1010.2 812.9 L1010.9 813.9 L1011.6 813.4 L1012.3 811.9 L1013.0 811.4 L1023.5 811.4 L1025.5 810.4 L1030.0 810.2 L1032.0 809.5 L1036.0 808.9 L1039.0 807.8 L1042.0 806.6 L1045.0 805.4 L1051.0 805.4 L1053.0 807.2 L1055.5 810.2 L1057.5 811.4 L1101.7 811.4 L1104.2 809.8 L1106.2 808.9 L1108.2 808.4 L1112.2 808.4 L1113.7 809.0 L1115.7 810.6 L1116.9 811.4 L1129.9 811.4 L1131.0 812.6 L1132.0 813.9 L1132.9 812.9 L1133.6 808.5 L1134.3 800.4 L1134.9 798.7 L1135.9 790.6 L1136.7 786.9 L1137.7 786.9 L1138.4 791.8 L1139.0 796.7 L1139.7 801.6 L1140.5 808.9 L1141.4 812.9 L1142.1 813.9 L1142.8 813.4 L1143.5 811.9 L1144.2 811.4 L1154.7 811.4 L1156.7 810.4 L1161.2 810.2 L1163.2 809.5 L1167.2 808.9 L1170.2 807.8 L1173.2 806.6 L1176.2 805.4 L1182.2 805.4 L1184.2 807.2 L1186.7 810.2 L1188.7 811.4 L1198.0 811.4"/>
</g>
<g fill="#0000ff">
<path d="M346.8 63.4 L364.8 63.4 L355.8 81 Z"/>
<path d="M478.2 63.4 L496.2 63.4 L487.2 81 Z"/>
<path d="M609.6 63.4 L627.6 63.4 L618.6 81 Z"/>
<path d="M741.0 63.4 L759.0 63.4 L750.0 81 Z"/>
<path d="M873.0 63.4 L891.0 63.4 L882.0 81 Z"/>
<path d="M1005.4 63.4 L1023.4 63.4 L1014.4 81 Z"/>
<path d="M1136.6 63.4 L1154.6 63.4 L1145.6 81 Z"/>
</g>
<g fill="#ececec" font-family="'Liberation Sans', sans-serif" font-size="14">
<text x="282" y="74.6">747</text><text x="282" y="86.8">80</text>
<text x="413.6" y="74.6">747</text><text x="413.6" y="86.8">80</text>
<text x="544.6" y="74.6">748</text><text x="544.6" y="86.8">80</text>
<text x="675.4" y="74.6">747</text><text x="675.4" y="86.8">80</text>
<text x="806.8" y="74.6">750</text><text x="806.8" y="86.8">80</text>
<text x="939" y="74.6">751</text><text x="939" y="86.8">80</text>
<text x="1071.4" y="74.6">747</text><text x="1071.4" y="86.8">80</text>
</g>
<g fill="#f0f0f0" font-family="'Liberation Sans', sans-serif" font-size="15.5">
<text x="6.5" y="84.0">I</text>
<text x="6.5" y="148.8">II</text>
<text x="6.5" y="213.6">III</text>
<text x="6.5" y="278.4">aVR</text>
<text x="6.5" y="343.2">aVL</text>
<text x="6.5" y="408.0">aVF</text>
<text x="6.5" y="472.8">V1</text>
<text x="6.5" y="537.6">V2</text>
<text x="6.5" y="602.4">V3</text>
<text x="6.5" y="667.2">V4</text>
<text x="6.5" y="732.0">V5</text>
<text x="6.5" y="796.8">V6</text>
</g>
<rect x="863.8" y="68" width="2.2" height="770.4" fill="#e9e9e9"/>
<rect x="925.3" y="80.0" width="2.2" height="41.2" fill="#e9e9e9"/>
<rect x="925.3" y="144.4" width="2.2" height="41.2" fill="#e9e9e9"/>
<rect x="925.3" y="208.9" width="2.2" height="41.2" fill="#e9e9e9"/>
<rect x="925.3" y="273.4" width="2.2" height="41.2" fill="#e9e9e9"/>
<rect x="923.6" y="337.8" width="2.2" height="41.2" fill="#e9e9e9"/>
<rect x="925.3" y="402.2" width="2.2" height="41.2" fill="#e9e9e9"/>
<rect x="927.1" y="466.7" width="2.2" height="41.2" fill="#e9e9e9"/>
<rect x="925.3" y="531.2" width="2.2" height="41.2" fill="#e9e9e9"/>
<rect x="925.3" y="595.6" width="2.2" height="41.2" fill="#e9e9e9"/>
<rect x="923.1" y="660.1" width="2.2" height="41.2" fill="#e9e9e9"/>
<rect x="925.3" y="724.5" width="2.2" height="41.2" fill="#e9e9e9"/>
<rect x="925.3" y="789.0" width="2.2" height="41.2" fill="#e9e9e9"/>
<path d="M867.2 447.8 L880.2 452.6 L875.8 455.4 L882.4 461.4 L880.6 463.2 L874.2 457 L871.4 461.2 Z" fill="#fff" stroke="#000" stroke-width="0.8"/>
</svg>
<div id="hdr"><span class="cj" style="left:57.5px">&lt; 返回</span><span style="left:189.6px;letter-spacing:1px">ID:</span><span style="left:235.2px;letter-spacing:0.83px">20191211144509</span><span class="cj" style="left:718.6px">诊断:</span></div>
<div id="panel">
<div id="ptitle"><span>综合参数</span><svg id="close" width="28" height="28" viewBox="0 0 28 28"><path d="M5.4 5.4 L22.2 22.2 M22.2 5.4 L5.4 22.2" stroke="#fff" stroke-width="7" stroke-linecap="round" fill="none"/></svg></div>
<div class="row first" style="top:59.5px"><span class="lab" style="letter-spacing:-1.008px">RR</span><span class="inp">747</span><span class="unit">ms</span></div>
<div class="row" style="top:98.2px"><span class="lab" style="letter-spacing:1.298px">QTmax</span><span class="inp">361</span><span class="unit">ms</span></div>
<div class="row" style="top:136.9px"><span class="lab" style="letter-spacing:1.530px">QTmin</span><span class="inp">344</span><span class="unit">ms</span></div>
<div class="row" style="top:175.6px"><span class="lab" style="letter-spacing:0.940px">QTd</span><span class="inp">17</span><span class="unit">ms</span></div>
<div class="row" style="top:214.3px"><span class="lab" style="letter-spacing:1.056px">QTcmax</span><span class="inp">417</span><span class="unit">ms</span></div>
<div class="row" style="top:253.0px"><span class="lab" style="letter-spacing:1.190px">QTcmin</span><span class="inp">398</span><span class="unit">ms</span></div>
<div class="row" style="top:291.7px"><span class="lab" style="letter-spacing:0.843px">QTcd</span><span class="inp">19</span><span class="unit">ms</span></div>
<div class="row" style="top:330.4px"><span class="lab" style="letter-spacing:1.443px">QTdr</span><span class="inp">2.00%</span><span class="unit"></span></div>
<div class="row" style="top:369.1px"><span class="lab" style="letter-spacing:0.778px">AdQTd</span><span class="inp">17</span><span class="unit">ms</span></div>
<div class="row" style="top:407.8px"><span class="lab" style="letter-spacing:-0.581px">SDQT</span><span class="inp">1.73</span><span class="unit">ms</span></div>
<div class="row" style="top:446.5px"><span class="lab" style="letter-spacing:0.579px">CQTd</span><span class="inp">0.49%</span><span class="unit"></span></div>
<div class="row" style="top:485.2px"><span class="lab" style="letter-spacing:0.070px">SDQTc</span><span class="inp">2.00</span><span class="unit">ms</span></div>
<div class="row" style="top:523.9px"><span class="lab" style="letter-spacing:0.602px">CQTcd</span><span class="inp">0.57%</span><span class="unit"></span></div>
</div>
<div id="bar">
<div class="btn" style="left:40.0px">上一秒</div>
<div class="btn" style="left:201.4px">下一秒</div>
<div class="btn" style="left:362.8px">上一页</div>
<div class="btn" style="left:524.2px">下一页</div>
<div class="btn" style="left:685.6px">参数</div>
<div class="btn" style="left:847.0px">编辑</div>
<div class="btn" style="left:1008.4px">打印</div>
</div>
</body></html>
